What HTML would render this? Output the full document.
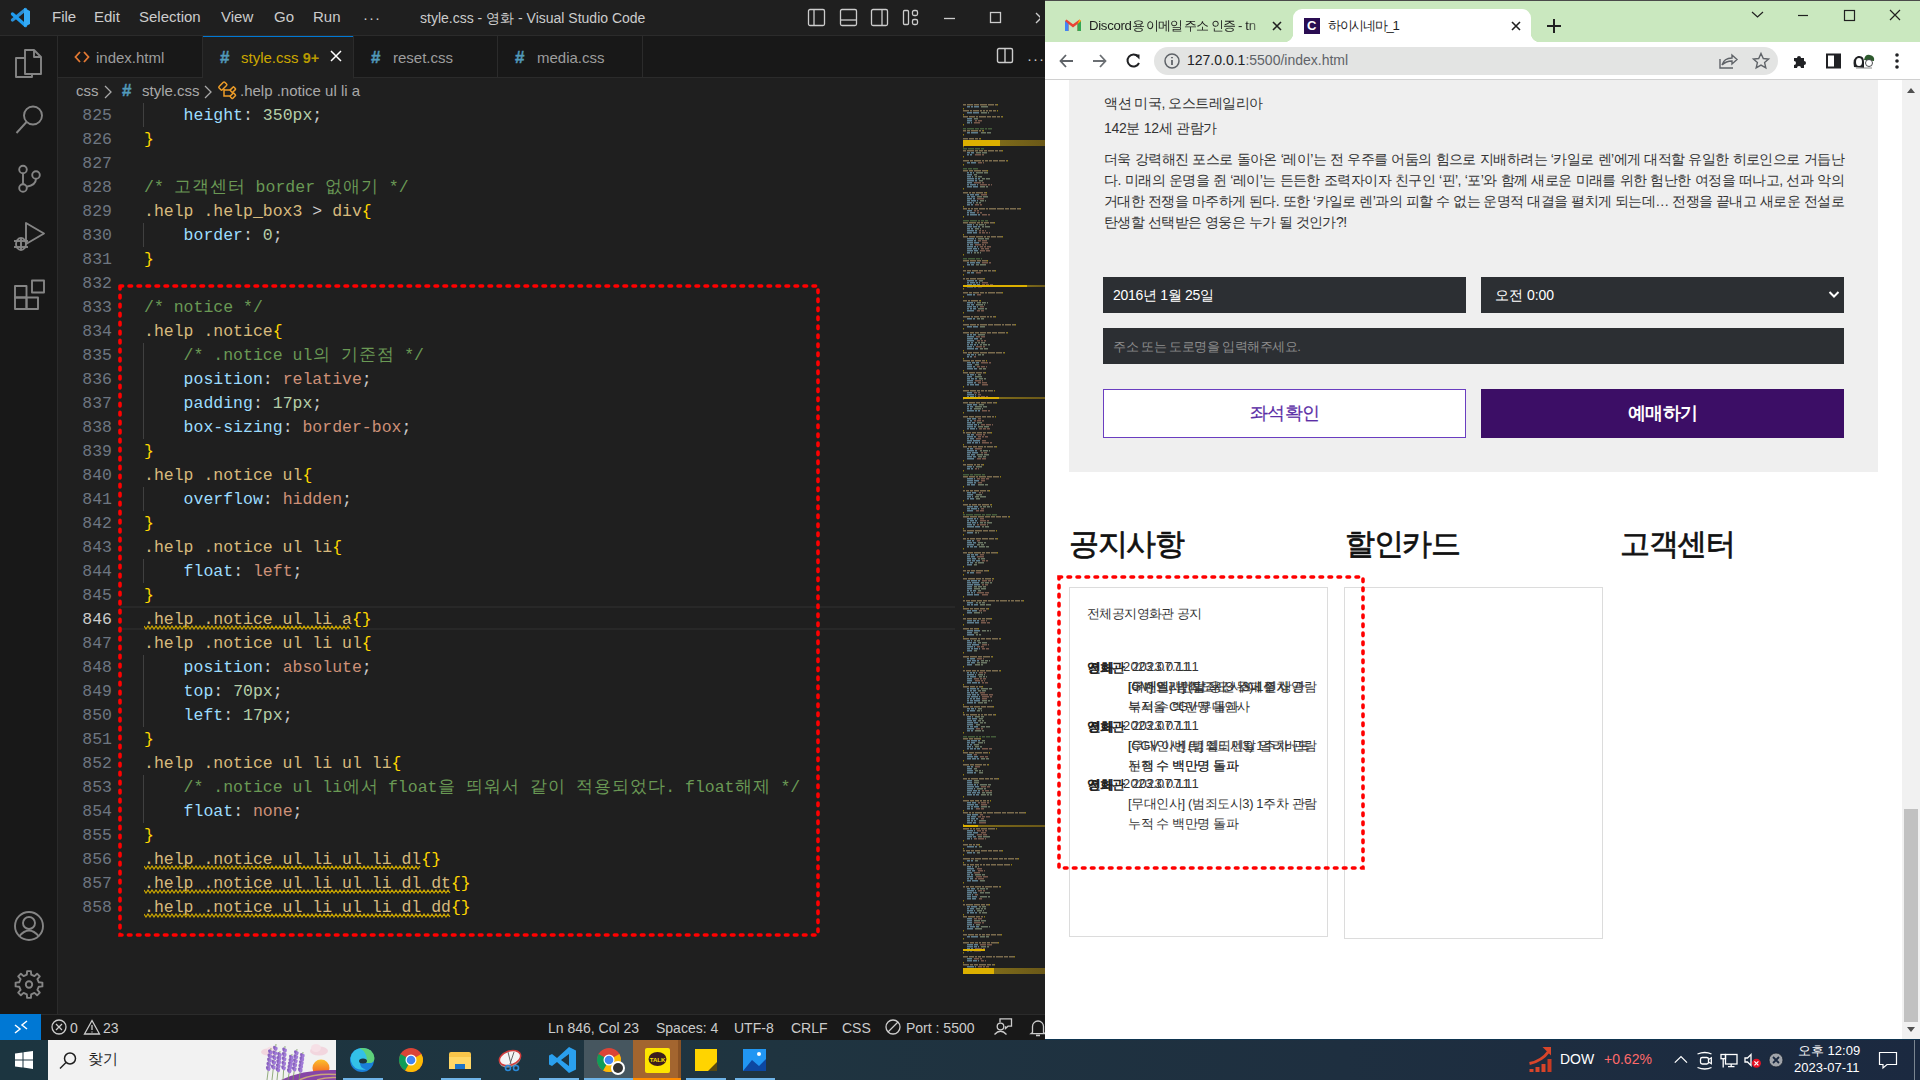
<!DOCTYPE html><html><head><meta charset="utf-8"><style>
*{margin:0;padding:0;box-sizing:border-box}
html,body{width:1920px;height:1080px;overflow:hidden;background:#1f1f1f;font-family:"Liberation Sans",sans-serif}
.ab{position:absolute}
.ui{font-family:"Liberation Sans",sans-serif;white-space:nowrap}
.mono{font-family:"Liberation Mono",monospace;white-space:pre}
</style></head><body>

<div class="ab" style="left:0;top:0;width:1045px;height:36px;background:#1f1f1f;border-bottom:1px solid #2b2b2b"></div>
<svg class="ab" style="left:0;top:0" width="40" height="36">
<path d="M25.5 9.5 L12.5 20" stroke="#2b8fd6" stroke-width="3.4" stroke-linecap="round"/>
<path d="M25.5 25.5 L12.5 14" stroke="#1e9cf0" stroke-width="3.4" stroke-linecap="round"/>
<path d="M24 8 L30 11 V24 L24 27 Z" fill="#35aaf5"/></svg>
<div class="ab ui" style="left:52px;top:8px;font-size:15px;color:#cccccc">File</div>
<div class="ab ui" style="left:94px;top:8px;font-size:15px;color:#cccccc">Edit</div>
<div class="ab ui" style="left:139px;top:8px;font-size:15px;color:#cccccc">Selection</div>
<div class="ab ui" style="left:221px;top:8px;font-size:15px;color:#cccccc">View</div>
<div class="ab ui" style="left:274px;top:8px;font-size:15px;color:#cccccc">Go</div>
<div class="ab ui" style="left:313px;top:8px;font-size:15px;color:#cccccc">Run</div>
<div class="ab ui" style="left:363px;top:9px;font-size:15px;color:#cccccc;letter-spacing:1px">···</div>
<div class="ab ui" style="left:420px;top:10px;font-size:14px;color:#cccccc">style.css - 영화 - Visual Studio Code</div>
<svg class="ab" style="left:800px;top:8px" width="240" height="20">
<g fill="none" stroke="#cccccc" stroke-width="1.3">
<rect x="8.5" y="1.5" width="16" height="16" rx="1.5"/><line x1="14" y1="2" x2="14" y2="17"/>
<rect x="40.5" y="1.5" width="16" height="16" rx="1.5"/><line x1="41" y1="12" x2="56" y2="12"/>
<rect x="71.5" y="1.5" width="16" height="16" rx="1.5"/><line x1="82" y1="2" x2="82" y2="17"/>
<rect x="103.5" y="2.5" width="5" height="14" rx="1"/><rect x="112.5" y="2.5" width="5" height="5" rx="1.5"/><rect x="112.5" y="11.5" width="5" height="5" rx="1.5"/>
<line x1="144" y1="10.5" x2="155" y2="10.5"/>
<rect x="190.5" y="4.5" width="10" height="10"/>
<line x1="236" y1="5" x2="246" y2="15"/><line x1="246" y1="5" x2="236" y2="15"/>
</g></svg>
<div class="ab" style="left:0;top:36px;width:58px;height:978px;background:#181818;border-right:1px solid #2b2b2b"></div>
<svg class="ab" style="left:0;top:36px" width="57" height="290" fill="none" stroke="#858585" stroke-width="1.9" stroke-linejoin="round">
<path d="M25 14 h9 l7 7 v17 h-16 z M34 14 v7 h7"/><path d="M25 22 h-9 v19 h16 v-3"/>
<circle cx="33" cy="79.5" r="9"/><line x1="26.5" y1="86" x2="16.5" y2="97"/>
<circle cx="23" cy="133.5" r="3.8"/><circle cx="23" cy="152" r="3.8"/><circle cx="36" cy="139" r="3.8"/><line x1="23" y1="137.3" x2="23" y2="148.2"/><path d="M36 142.8 q0 6.5 -9.5 8"/>
<path d="M26 187 v21 l18 -10.5 z"/><ellipse cx="21" cy="208" rx="5" ry="6" fill="#181818"/><line x1="14" y1="205" x2="28" y2="205"/><line x1="14" y1="211" x2="28" y2="211"/><line x1="21" y1="203" x2="21" y2="214"/>
<rect x="15" y="261.5" width="11.5" height="11.5"/><rect x="26.5" y="261.5" width="11.5" height="11.5"/><rect x="15" y="250" width="11.5" height="11.5"/><rect x="32" y="244.5" width="12" height="12"/>
</svg>
<svg class="ab" style="left:0;top:900px" width="57" height="100" fill="none" stroke="#858585" stroke-width="1.9" stroke-linejoin="round">
<circle cx="29" cy="26" r="14"/><circle cx="29" cy="23" r="6"/><path d="M19 36.5 q10 -12 20 0"/>
<path d="M38.8 82.3 L42.4 82.6 L42.4 86.4 L38.8 86.7 L37.4 89.9 L39.8 92.6 L37.1 95.3 L34.4 92.9 L31.2 94.3 L30.9 97.9 L27.1 97.9 L26.8 94.3 L23.6 92.9 L20.9 95.3 L18.2 92.6 L20.6 89.9 L19.2 86.7 L15.6 86.4 L15.6 82.6 L19.2 82.3 L20.6 79.1 L18.2 76.4 L20.9 73.7 L23.6 76.1 L26.8 74.7 L27.1 71.1 L30.9 71.1 L31.2 74.7 L34.4 76.1 L37.1 73.7 L39.8 76.4 L37.4 79.1 Z"/><circle cx="29" cy="84.5" r="3.2"/>
</svg>
<div class="ab" style="left:58px;top:36px;width:987px;height:42px;background:#181818;border-bottom:1px solid #2b2b2b"></div>
<div class="ab" style="left:58px;top:36px;width:145px;height:42px;background:#181818;border-right:1px solid #2b2b2b;border-bottom:1px solid #2b2b2b;"></div>
<div class="ab" style="left:203px;top:36px;width:151px;height:43px;background:#1f1f1f;border-right:1px solid #2b2b2b;border-bottom:1px solid #1f1f1f;"></div>
<div class="ab" style="left:354px;top:36px;width:144px;height:42px;background:#181818;border-right:1px solid #2b2b2b;border-bottom:1px solid #2b2b2b;"></div>
<div class="ab" style="left:498px;top:36px;width:145px;height:42px;background:#181818;border-right:1px solid #2b2b2b;border-bottom:1px solid #2b2b2b;"></div>
<div class="ab" style="left:203px;top:36px;width:150px;height:1px;background:#0078d4"></div>
<svg class="ab" style="left:74px;top:50px" width="16" height="14" fill="none" stroke="#e37933" stroke-width="1.8"><path d="M6 2 L1.5 7 L6 12 M10 2 L14.5 7 L10 12"/></svg>
<div class="ab ui" style="left:96px;top:49px;font-size:15px;color:#9d9d9d">index.html</div>
<div class="ab ui" style="left:220px;top:48px;font-size:17px;color:#519aba;font-weight:bold;-webkit-text-stroke:0.4px #519aba">#</div>
<div class="ab ui" style="left:241px;top:49px;font-size:15px;color:#cca700">style.css <span style="font-size:14.5px;color:#b89a00;font-weight:bold">9+</span></div>
<svg class="ab" style="left:329px;top:49px" width="14" height="14" stroke="#ffffff" stroke-width="1.5"><path d="M2 2 L12 12 M12 2 L2 12"/></svg>
<div class="ab ui" style="left:371px;top:48px;font-size:17px;color:#519aba;font-weight:bold;-webkit-text-stroke:0.4px #519aba">#</div>
<div class="ab ui" style="left:393px;top:49px;font-size:15px;color:#9d9d9d">reset.css</div>
<div class="ab ui" style="left:515px;top:48px;font-size:17px;color:#519aba;font-weight:bold;-webkit-text-stroke:0.4px #519aba">#</div>
<div class="ab ui" style="left:537px;top:49px;font-size:15px;color:#9d9d9d">media.css</div>
<svg class="ab" style="left:996px;top:47px" width="20" height="18" fill="none" stroke="#cccccc" stroke-width="1.4"><rect x="1.5" y="1.5" width="15" height="14" rx="1.5"/><line x1="9" y1="2" x2="9" y2="15"/></svg>
<div class="ab ui" style="left:1027px;top:50px;font-size:15px;color:#cccccc;letter-spacing:1px">···</div>
<div class="ab" style="left:58px;top:79px;width:987px;height:24px;background:#1f1f1f"></div>
<div class="ab ui" style="left:76px;top:82px;font-size:15px;color:#a9a9a9">css</div>
<svg class="ab" style="left:103px;top:85px" width="10" height="14" fill="none" stroke="#a9a9a9" stroke-width="1.3"><path d="M2 1 L8 7 L2 13"/></svg>
<div class="ab ui" style="left:122px;top:81px;font-size:17px;color:#519aba;font-weight:bold;-webkit-text-stroke:0.4px #519aba">#</div>
<div class="ab ui" style="left:142px;top:82px;font-size:15px;color:#a9a9a9">style.css</div>
<svg class="ab" style="left:203px;top:85px" width="10" height="14" fill="none" stroke="#a9a9a9" stroke-width="1.3"><path d="M2 1 L8 7 L2 13"/></svg>
<svg class="ab" style="left:214px;top:80px" width="24" height="22" fill="none" stroke="#ee9d28" stroke-width="1.5"><rect x="4.8" y="3.8" width="8" height="4.5" rx="1" transform="rotate(-45 8.8 6)"/><rect x="16.4" y="7.9" width="5" height="3.4" rx="0.8" transform="rotate(-45 18.9 9.6)"/><rect x="16.4" y="14.1" width="5" height="3.4" rx="0.8" transform="rotate(-45 18.9 15.8)"/><path d="M10 9 V16 H16.8 M10 10 H16.8"/></svg>
<div class="ab ui" style="left:240px;top:82px;font-size:15px;color:#a9a9a9">.help .notice ul li a</div>
<div class="ab" style="left:120px;top:606px;width:835px;height:24px;border-top:2px solid #282828;border-bottom:2px solid #282828"></div>
<div class="ab mono" style="left:60px;top:104px;width:52px;height:24px;line-height:24px;text-align:right;font-size:16.5px;color:#6e7681">825</div>
<div class="ab" style="left:143px;top:103px;width:1px;height:24px;background:#404040"></div>
<div class="ab mono" style="left:144px;top:104px;height:24px;line-height:24px;font-size:16.5px"><span style="color:#cccccc">    </span><span style="color:#9cdcfe">height</span><span style="color:#cccccc">: </span><span style="color:#b5cea8">350px</span><span style="color:#cccccc">;</span></div>
<div class="ab mono" style="left:60px;top:128px;width:52px;height:24px;line-height:24px;text-align:right;font-size:16.5px;color:#6e7681">826</div>
<div class="ab mono" style="left:144px;top:128px;height:24px;line-height:24px;font-size:16.5px"><span style="color:#ffd700">}</span></div>
<div class="ab mono" style="left:60px;top:152px;width:52px;height:24px;line-height:24px;text-align:right;font-size:16.5px;color:#6e7681">827</div>
<div class="ab mono" style="left:60px;top:176px;width:52px;height:24px;line-height:24px;text-align:right;font-size:16.5px;color:#6e7681">828</div>
<div class="ab mono" style="left:144px;top:176px;height:24px;line-height:24px;font-size:16.5px"><span style="color:#6a9955">/* <span style="display:inline-block;width:18px;text-align:center">고</span><span style="display:inline-block;width:18px;text-align:center">객</span><span style="display:inline-block;width:18px;text-align:center">센</span><span style="display:inline-block;width:18px;text-align:center">터</span> border <span style="display:inline-block;width:18px;text-align:center">없</span><span style="display:inline-block;width:18px;text-align:center">애</span><span style="display:inline-block;width:18px;text-align:center">기</span> */</span></div>
<div class="ab mono" style="left:60px;top:200px;width:52px;height:24px;line-height:24px;text-align:right;font-size:16.5px;color:#6e7681">829</div>
<div class="ab mono" style="left:144px;top:200px;height:24px;line-height:24px;font-size:16.5px"><span style="color:#d7ba7d">.help .help_box3 </span><span style="color:#cccccc">&gt; </span><span style="color:#d7ba7d">div</span><span style="color:#ffd700">{</span></div>
<div class="ab mono" style="left:60px;top:224px;width:52px;height:24px;line-height:24px;text-align:right;font-size:16.5px;color:#6e7681">830</div>
<div class="ab" style="left:143px;top:223px;width:1px;height:24px;background:#404040"></div>
<div class="ab mono" style="left:144px;top:224px;height:24px;line-height:24px;font-size:16.5px"><span style="color:#cccccc">    </span><span style="color:#9cdcfe">border</span><span style="color:#cccccc">: </span><span style="color:#b5cea8">0</span><span style="color:#cccccc">;</span></div>
<div class="ab mono" style="left:60px;top:248px;width:52px;height:24px;line-height:24px;text-align:right;font-size:16.5px;color:#6e7681">831</div>
<div class="ab mono" style="left:144px;top:248px;height:24px;line-height:24px;font-size:16.5px"><span style="color:#ffd700">}</span></div>
<div class="ab mono" style="left:60px;top:272px;width:52px;height:24px;line-height:24px;text-align:right;font-size:16.5px;color:#6e7681">832</div>
<div class="ab mono" style="left:60px;top:296px;width:52px;height:24px;line-height:24px;text-align:right;font-size:16.5px;color:#6e7681">833</div>
<div class="ab mono" style="left:144px;top:296px;height:24px;line-height:24px;font-size:16.5px"><span style="color:#6a9955">/* notice */</span></div>
<div class="ab mono" style="left:60px;top:320px;width:52px;height:24px;line-height:24px;text-align:right;font-size:16.5px;color:#6e7681">834</div>
<div class="ab mono" style="left:144px;top:320px;height:24px;line-height:24px;font-size:16.5px"><span style="color:#d7ba7d">.help .notice</span><span style="color:#ffd700">{</span></div>
<div class="ab mono" style="left:60px;top:344px;width:52px;height:24px;line-height:24px;text-align:right;font-size:16.5px;color:#6e7681">835</div>
<div class="ab" style="left:143px;top:343px;width:1px;height:24px;background:#404040"></div>
<div class="ab mono" style="left:144px;top:344px;height:24px;line-height:24px;font-size:16.5px"><span style="color:#cccccc">    </span><span style="color:#6a9955">/* .notice ul<span style="display:inline-block;width:18px;text-align:center">의</span> <span style="display:inline-block;width:18px;text-align:center">기</span><span style="display:inline-block;width:18px;text-align:center">준</span><span style="display:inline-block;width:18px;text-align:center">점</span> */</span></div>
<div class="ab mono" style="left:60px;top:368px;width:52px;height:24px;line-height:24px;text-align:right;font-size:16.5px;color:#6e7681">836</div>
<div class="ab" style="left:143px;top:367px;width:1px;height:24px;background:#404040"></div>
<div class="ab mono" style="left:144px;top:368px;height:24px;line-height:24px;font-size:16.5px"><span style="color:#cccccc">    </span><span style="color:#9cdcfe">position</span><span style="color:#cccccc">: </span><span style="color:#ce9178">relative</span><span style="color:#cccccc">;</span></div>
<div class="ab mono" style="left:60px;top:392px;width:52px;height:24px;line-height:24px;text-align:right;font-size:16.5px;color:#6e7681">837</div>
<div class="ab" style="left:143px;top:391px;width:1px;height:24px;background:#404040"></div>
<div class="ab mono" style="left:144px;top:392px;height:24px;line-height:24px;font-size:16.5px"><span style="color:#cccccc">    </span><span style="color:#9cdcfe">padding</span><span style="color:#cccccc">: </span><span style="color:#b5cea8">17px</span><span style="color:#cccccc">;</span></div>
<div class="ab mono" style="left:60px;top:416px;width:52px;height:24px;line-height:24px;text-align:right;font-size:16.5px;color:#6e7681">838</div>
<div class="ab" style="left:143px;top:415px;width:1px;height:24px;background:#404040"></div>
<div class="ab mono" style="left:144px;top:416px;height:24px;line-height:24px;font-size:16.5px"><span style="color:#cccccc">    </span><span style="color:#9cdcfe">box-sizing</span><span style="color:#cccccc">: </span><span style="color:#ce9178">border-box</span><span style="color:#cccccc">;</span></div>
<div class="ab mono" style="left:60px;top:440px;width:52px;height:24px;line-height:24px;text-align:right;font-size:16.5px;color:#6e7681">839</div>
<div class="ab mono" style="left:144px;top:440px;height:24px;line-height:24px;font-size:16.5px"><span style="color:#ffd700">}</span></div>
<div class="ab mono" style="left:60px;top:464px;width:52px;height:24px;line-height:24px;text-align:right;font-size:16.5px;color:#6e7681">840</div>
<div class="ab mono" style="left:144px;top:464px;height:24px;line-height:24px;font-size:16.5px"><span style="color:#d7ba7d">.help .notice ul</span><span style="color:#ffd700">{</span></div>
<div class="ab mono" style="left:60px;top:488px;width:52px;height:24px;line-height:24px;text-align:right;font-size:16.5px;color:#6e7681">841</div>
<div class="ab" style="left:143px;top:487px;width:1px;height:24px;background:#404040"></div>
<div class="ab mono" style="left:144px;top:488px;height:24px;line-height:24px;font-size:16.5px"><span style="color:#cccccc">    </span><span style="color:#9cdcfe">overflow</span><span style="color:#cccccc">: </span><span style="color:#ce9178">hidden</span><span style="color:#cccccc">;</span></div>
<div class="ab mono" style="left:60px;top:512px;width:52px;height:24px;line-height:24px;text-align:right;font-size:16.5px;color:#6e7681">842</div>
<div class="ab mono" style="left:144px;top:512px;height:24px;line-height:24px;font-size:16.5px"><span style="color:#ffd700">}</span></div>
<div class="ab mono" style="left:60px;top:536px;width:52px;height:24px;line-height:24px;text-align:right;font-size:16.5px;color:#6e7681">843</div>
<div class="ab mono" style="left:144px;top:536px;height:24px;line-height:24px;font-size:16.5px"><span style="color:#d7ba7d">.help .notice ul li</span><span style="color:#ffd700">{</span></div>
<div class="ab mono" style="left:60px;top:560px;width:52px;height:24px;line-height:24px;text-align:right;font-size:16.5px;color:#6e7681">844</div>
<div class="ab" style="left:143px;top:559px;width:1px;height:24px;background:#404040"></div>
<div class="ab mono" style="left:144px;top:560px;height:24px;line-height:24px;font-size:16.5px"><span style="color:#cccccc">    </span><span style="color:#9cdcfe">float</span><span style="color:#cccccc">: </span><span style="color:#ce9178">left</span><span style="color:#cccccc">;</span></div>
<div class="ab mono" style="left:60px;top:584px;width:52px;height:24px;line-height:24px;text-align:right;font-size:16.5px;color:#6e7681">845</div>
<div class="ab mono" style="left:144px;top:584px;height:24px;line-height:24px;font-size:16.5px"><span style="color:#ffd700">}</span></div>
<div class="ab mono" style="left:60px;top:608px;width:52px;height:24px;line-height:24px;text-align:right;font-size:16.5px;color:#cccccc">846</div>
<div class="ab mono" style="left:144px;top:608px;height:24px;line-height:24px;font-size:16.5px"><span style="color:#d7ba7d">.help .notice ul li a</span><span style="color:#ffd700">{}</span></div>
<div class="ab mono" style="left:60px;top:632px;width:52px;height:24px;line-height:24px;text-align:right;font-size:16.5px;color:#6e7681">847</div>
<div class="ab mono" style="left:144px;top:632px;height:24px;line-height:24px;font-size:16.5px"><span style="color:#d7ba7d">.help .notice ul li ul</span><span style="color:#ffd700">{</span></div>
<div class="ab mono" style="left:60px;top:656px;width:52px;height:24px;line-height:24px;text-align:right;font-size:16.5px;color:#6e7681">848</div>
<div class="ab" style="left:143px;top:655px;width:1px;height:24px;background:#404040"></div>
<div class="ab mono" style="left:144px;top:656px;height:24px;line-height:24px;font-size:16.5px"><span style="color:#cccccc">    </span><span style="color:#9cdcfe">position</span><span style="color:#cccccc">: </span><span style="color:#ce9178">absolute</span><span style="color:#cccccc">;</span></div>
<div class="ab mono" style="left:60px;top:680px;width:52px;height:24px;line-height:24px;text-align:right;font-size:16.5px;color:#6e7681">849</div>
<div class="ab" style="left:143px;top:679px;width:1px;height:24px;background:#404040"></div>
<div class="ab mono" style="left:144px;top:680px;height:24px;line-height:24px;font-size:16.5px"><span style="color:#cccccc">    </span><span style="color:#9cdcfe">top</span><span style="color:#cccccc">: </span><span style="color:#b5cea8">70px</span><span style="color:#cccccc">;</span></div>
<div class="ab mono" style="left:60px;top:704px;width:52px;height:24px;line-height:24px;text-align:right;font-size:16.5px;color:#6e7681">850</div>
<div class="ab" style="left:143px;top:703px;width:1px;height:24px;background:#404040"></div>
<div class="ab mono" style="left:144px;top:704px;height:24px;line-height:24px;font-size:16.5px"><span style="color:#cccccc">    </span><span style="color:#9cdcfe">left</span><span style="color:#cccccc">: </span><span style="color:#b5cea8">17px</span><span style="color:#cccccc">;</span></div>
<div class="ab mono" style="left:60px;top:728px;width:52px;height:24px;line-height:24px;text-align:right;font-size:16.5px;color:#6e7681">851</div>
<div class="ab mono" style="left:144px;top:728px;height:24px;line-height:24px;font-size:16.5px"><span style="color:#ffd700">}</span></div>
<div class="ab mono" style="left:60px;top:752px;width:52px;height:24px;line-height:24px;text-align:right;font-size:16.5px;color:#6e7681">852</div>
<div class="ab mono" style="left:144px;top:752px;height:24px;line-height:24px;font-size:16.5px"><span style="color:#d7ba7d">.help .notice ul li ul li</span><span style="color:#ffd700">{</span></div>
<div class="ab mono" style="left:60px;top:776px;width:52px;height:24px;line-height:24px;text-align:right;font-size:16.5px;color:#6e7681">853</div>
<div class="ab" style="left:143px;top:775px;width:1px;height:24px;background:#404040"></div>
<div class="ab mono" style="left:144px;top:776px;height:24px;line-height:24px;font-size:16.5px"><span style="color:#cccccc">    </span><span style="color:#6a9955">/* .notice ul li<span style="display:inline-block;width:18px;text-align:center">에</span><span style="display:inline-block;width:18px;text-align:center">서</span> float<span style="display:inline-block;width:18px;text-align:center">을</span> <span style="display:inline-block;width:18px;text-align:center">띄</span><span style="display:inline-block;width:18px;text-align:center">워</span><span style="display:inline-block;width:18px;text-align:center">서</span> <span style="display:inline-block;width:18px;text-align:center">같</span><span style="display:inline-block;width:18px;text-align:center">이</span> <span style="display:inline-block;width:18px;text-align:center">적</span><span style="display:inline-block;width:18px;text-align:center">용</span><span style="display:inline-block;width:18px;text-align:center">되</span><span style="display:inline-block;width:18px;text-align:center">었</span><span style="display:inline-block;width:18px;text-align:center">다</span>. float<span style="display:inline-block;width:18px;text-align:center">해</span><span style="display:inline-block;width:18px;text-align:center">제</span> */</span></div>
<div class="ab mono" style="left:60px;top:800px;width:52px;height:24px;line-height:24px;text-align:right;font-size:16.5px;color:#6e7681">854</div>
<div class="ab" style="left:143px;top:799px;width:1px;height:24px;background:#404040"></div>
<div class="ab mono" style="left:144px;top:800px;height:24px;line-height:24px;font-size:16.5px"><span style="color:#cccccc">    </span><span style="color:#9cdcfe">float</span><span style="color:#cccccc">: </span><span style="color:#ce9178">none</span><span style="color:#cccccc">;</span></div>
<div class="ab mono" style="left:60px;top:824px;width:52px;height:24px;line-height:24px;text-align:right;font-size:16.5px;color:#6e7681">855</div>
<div class="ab mono" style="left:144px;top:824px;height:24px;line-height:24px;font-size:16.5px"><span style="color:#ffd700">}</span></div>
<div class="ab mono" style="left:60px;top:848px;width:52px;height:24px;line-height:24px;text-align:right;font-size:16.5px;color:#6e7681">856</div>
<div class="ab mono" style="left:144px;top:848px;height:24px;line-height:24px;font-size:16.5px"><span style="color:#d7ba7d">.help .notice ul li ul li dl</span><span style="color:#ffd700">{}</span></div>
<div class="ab mono" style="left:60px;top:872px;width:52px;height:24px;line-height:24px;text-align:right;font-size:16.5px;color:#6e7681">857</div>
<div class="ab mono" style="left:144px;top:872px;height:24px;line-height:24px;font-size:16.5px"><span style="color:#d7ba7d">.help .notice ul li ul li dl dt</span><span style="color:#ffd700">{}</span></div>
<div class="ab mono" style="left:60px;top:896px;width:52px;height:24px;line-height:24px;text-align:right;font-size:16.5px;color:#6e7681">858</div>
<div class="ab mono" style="left:144px;top:896px;height:24px;line-height:24px;font-size:16.5px"><span style="color:#d7ba7d">.help .notice ul li ul li dl dd</span><span style="color:#ffd700">{}</span></div>
<svg class="ab" style="left:144px;top:625px" width="208" height="5"><path d="M0 1L2 4L4 1L6 4L8 1L10 4L12 1L14 4L16 1L18 4L20 1L22 4L24 1L26 4L28 1L30 4L32 1L34 4L36 1L38 4L40 1L42 4L44 1L46 4L48 1L50 4L52 1L54 4L56 1L58 4L60 1L62 4L64 1L66 4L68 1L70 4L72 1L74 4L76 1L78 4L80 1L82 4L84 1L86 4L88 1L90 4L92 1L94 4L96 1L98 4L100 1L102 4L104 1L106 4L108 1L110 4L112 1L114 4L116 1L118 4L120 1L122 4L124 1L126 4L128 1L130 4L132 1L134 4L136 1L138 4L140 1L142 4L144 1L146 4L148 1L150 4L152 1L154 4L156 1L158 4L160 1L162 4L164 1L166 4L168 1L170 4L172 1L174 4L176 1L178 4L180 1L182 4L184 1L186 4L188 1L190 4L192 1L194 4L196 1L198 4L200 1L202 4L204 1L206 4" fill="none" stroke="#cca700" stroke-width="1.2"/></svg>
<svg class="ab" style="left:144px;top:865px" width="277" height="5"><path d="M0 1L2 4L4 1L6 4L8 1L10 4L12 1L14 4L16 1L18 4L20 1L22 4L24 1L26 4L28 1L30 4L32 1L34 4L36 1L38 4L40 1L42 4L44 1L46 4L48 1L50 4L52 1L54 4L56 1L58 4L60 1L62 4L64 1L66 4L68 1L70 4L72 1L74 4L76 1L78 4L80 1L82 4L84 1L86 4L88 1L90 4L92 1L94 4L96 1L98 4L100 1L102 4L104 1L106 4L108 1L110 4L112 1L114 4L116 1L118 4L120 1L122 4L124 1L126 4L128 1L130 4L132 1L134 4L136 1L138 4L140 1L142 4L144 1L146 4L148 1L150 4L152 1L154 4L156 1L158 4L160 1L162 4L164 1L166 4L168 1L170 4L172 1L174 4L176 1L178 4L180 1L182 4L184 1L186 4L188 1L190 4L192 1L194 4L196 1L198 4L200 1L202 4L204 1L206 4L208 1L210 4L212 1L214 4L216 1L218 4L220 1L222 4L224 1L226 4L228 1L230 4L232 1L234 4L236 1L238 4L240 1L242 4L244 1L246 4L248 1L250 4L252 1L254 4L256 1L258 4L260 1L262 4L264 1L266 4L268 1L270 4L272 1L274 4L276 1" fill="none" stroke="#cca700" stroke-width="1.2"/></svg>
<svg class="ab" style="left:144px;top:889px" width="307" height="5"><path d="M0 1L2 4L4 1L6 4L8 1L10 4L12 1L14 4L16 1L18 4L20 1L22 4L24 1L26 4L28 1L30 4L32 1L34 4L36 1L38 4L40 1L42 4L44 1L46 4L48 1L50 4L52 1L54 4L56 1L58 4L60 1L62 4L64 1L66 4L68 1L70 4L72 1L74 4L76 1L78 4L80 1L82 4L84 1L86 4L88 1L90 4L92 1L94 4L96 1L98 4L100 1L102 4L104 1L106 4L108 1L110 4L112 1L114 4L116 1L118 4L120 1L122 4L124 1L126 4L128 1L130 4L132 1L134 4L136 1L138 4L140 1L142 4L144 1L146 4L148 1L150 4L152 1L154 4L156 1L158 4L160 1L162 4L164 1L166 4L168 1L170 4L172 1L174 4L176 1L178 4L180 1L182 4L184 1L186 4L188 1L190 4L192 1L194 4L196 1L198 4L200 1L202 4L204 1L206 4L208 1L210 4L212 1L214 4L216 1L218 4L220 1L222 4L224 1L226 4L228 1L230 4L232 1L234 4L236 1L238 4L240 1L242 4L244 1L246 4L248 1L250 4L252 1L254 4L256 1L258 4L260 1L262 4L264 1L266 4L268 1L270 4L272 1L274 4L276 1L278 4L280 1L282 4L284 1L286 4L288 1L290 4L292 1L294 4L296 1L298 4L300 1L302 4L304 1L306 4" fill="none" stroke="#cca700" stroke-width="1.2"/></svg>
<svg class="ab" style="left:144px;top:913px" width="307" height="5"><path d="M0 1L2 4L4 1L6 4L8 1L10 4L12 1L14 4L16 1L18 4L20 1L22 4L24 1L26 4L28 1L30 4L32 1L34 4L36 1L38 4L40 1L42 4L44 1L46 4L48 1L50 4L52 1L54 4L56 1L58 4L60 1L62 4L64 1L66 4L68 1L70 4L72 1L74 4L76 1L78 4L80 1L82 4L84 1L86 4L88 1L90 4L92 1L94 4L96 1L98 4L100 1L102 4L104 1L106 4L108 1L110 4L112 1L114 4L116 1L118 4L120 1L122 4L124 1L126 4L128 1L130 4L132 1L134 4L136 1L138 4L140 1L142 4L144 1L146 4L148 1L150 4L152 1L154 4L156 1L158 4L160 1L162 4L164 1L166 4L168 1L170 4L172 1L174 4L176 1L178 4L180 1L182 4L184 1L186 4L188 1L190 4L192 1L194 4L196 1L198 4L200 1L202 4L204 1L206 4L208 1L210 4L212 1L214 4L216 1L218 4L220 1L222 4L224 1L226 4L228 1L230 4L232 1L234 4L236 1L238 4L240 1L242 4L244 1L246 4L248 1L250 4L252 1L254 4L256 1L258 4L260 1L262 4L264 1L266 4L268 1L270 4L272 1L274 4L276 1L278 4L280 1L282 4L284 1L286 4L288 1L290 4L292 1L294 4L296 1L298 4L300 1L302 4L304 1L306 4" fill="none" stroke="#cca700" stroke-width="1.2"/></svg>
<svg class="ab" style="left:0;top:0" width="1045" height="1000"><path d="M963 104h3v1.6h-3zM967 104h6v1.6h-6zM974 104h5v1.6h-5zM980 104h7v1.6h-7zM988 104h6v1.6h-6zM995 104h2v1.6h-2zM963 110h6v1.6h-6zM970 110h2v1.6h-2zM973 110h6v1.6h-6zM980 110h2v1.6h-2zM983 110h2v1.6h-2zM986 110h2v1.6h-2zM989 110h3v1.6h-3zM993 110h3v1.6h-3zM963 116h5v1.6h-5zM969 116h6v1.6h-6zM976 116h2v1.6h-2zM979 116h7v1.6h-7zM987 116h4v1.6h-4zM992 116h4v1.6h-4zM997 116h3v1.6h-3zM1001 116h1v1.6h-1zM963 130h3v1.6h-3zM967 130h3v1.6h-3zM971 130h7v1.6h-7zM979 130h2v1.6h-2zM982 130h1v1.6h-1zM963 138h5v1.6h-5zM969 138h5v1.6h-5zM975 138h3v1.6h-3zM979 138h1v1.6h-1zM963 150h3v1.6h-3zM967 150h7v1.6h-7zM975 150h3v1.6h-3zM979 150h4v1.6h-4zM984 150h3v1.6h-3zM988 150h6v1.6h-6zM995 150h3v1.6h-3zM999 150h3v1.6h-3zM963 160h6v1.6h-6zM970 160h3v1.6h-3zM974 160h7v1.6h-7zM982 160h2v1.6h-2zM985 160h3v1.6h-3zM989 160h3v1.6h-3zM993 160h5v1.6h-5zM999 160h6v1.6h-6zM1006 160h1v1.6h-1zM963 170h5v1.6h-5zM969 170h4v1.6h-4zM974 170h7v1.6h-7zM982 170h5v1.6h-5zM963 192h5v1.6h-5zM969 192h2v1.6h-2zM972 192h3v1.6h-3zM976 192h7v1.6h-7zM984 192h2v1.6h-2zM963 208h4v1.6h-4zM968 208h2v1.6h-2zM971 208h2v1.6h-2zM974 208h4v1.6h-4zM979 208h6v1.6h-6zM986 208h2v1.6h-2zM989 208h7v1.6h-7zM997 208h7v1.6h-7zM1005 208h4v1.6h-4zM1010 208h6v1.6h-6zM1017 208h3v1.6h-3zM963 222h5v1.6h-5zM969 222h7v1.6h-7zM977 222h3v1.6h-3zM981 222h2v1.6h-2zM984 222h5v1.6h-5zM990 222h4v1.6h-4zM963 236h5v1.6h-5zM969 236h6v1.6h-6zM976 236h7v1.6h-7zM984 236h2v1.6h-2zM987 236h3v1.6h-3zM991 236h5v1.6h-5zM997 236h5v1.6h-5zM963 260h6v1.6h-6zM970 260h6v1.6h-6zM977 260h4v1.6h-4zM982 260h5v1.6h-5zM963 270h3v1.6h-3zM967 270h4v1.6h-4zM972 270h6v1.6h-6zM979 270h4v1.6h-4zM984 270h3v1.6h-3zM988 270h3v1.6h-3zM992 270h3v1.6h-3zM963 278h2v1.6h-2zM966 278h3v1.6h-3zM970 278h6v1.6h-6zM977 278h7v1.6h-7zM963 292h5v1.6h-5zM969 292h3v1.6h-3zM973 292h6v1.6h-6zM980 292h4v1.6h-4zM985 292h2v1.6h-2zM988 292h7v1.6h-7zM996 292h6v1.6h-6zM963 300h4v1.6h-4zM968 300h2v1.6h-2zM971 300h7v1.6h-7zM979 300h1v1.6h-1zM963 316h7v1.6h-7zM971 316h2v1.6h-2zM974 316h5v1.6h-5zM980 316h6v1.6h-6zM987 316h2v1.6h-2zM990 316h2v1.6h-2zM993 316h2v1.6h-2zM963 324h6v1.6h-6zM970 324h6v1.6h-6zM977 324h2v1.6h-2zM980 324h7v1.6h-7zM988 324h5v1.6h-5zM994 324h7v1.6h-7zM1002 324h2v1.6h-2zM1005 324h6v1.6h-6zM1012 324h3v1.6h-3zM963 332h6v1.6h-6zM970 332h4v1.6h-4zM975 332h4v1.6h-4zM980 332h6v1.6h-6zM987 332h4v1.6h-4zM992 332h5v1.6h-5zM998 332h7v1.6h-7zM1006 332h1v1.6h-1zM963 352h4v1.6h-4zM968 352h4v1.6h-4zM973 352h6v1.6h-6zM980 352h7v1.6h-7zM988 352h7v1.6h-7zM996 352h6v1.6h-6zM1003 352h1v1.6h-1zM963 360h7v1.6h-7zM971 360h3v1.6h-3zM975 360h6v1.6h-6zM982 360h3v1.6h-3zM963 372h5v1.6h-5zM969 372h6v1.6h-6zM976 372h6v1.6h-6zM983 372h2v1.6h-2zM963 390h6v1.6h-6zM970 390h6v1.6h-6zM977 390h3v1.6h-3zM981 390h3v1.6h-3zM985 390h2v1.6h-2zM988 390h5v1.6h-5zM963 402h5v1.6h-5zM969 402h6v1.6h-6zM976 402h4v1.6h-4zM981 402h5v1.6h-5zM987 402h5v1.6h-5zM993 402h3v1.6h-3zM963 416h5v1.6h-5zM969 416h5v1.6h-5zM975 416h6v1.6h-6zM982 416h4v1.6h-4zM987 416h4v1.6h-4zM992 416h2v1.6h-2zM963 432h2v1.6h-2zM966 432h5v1.6h-5zM972 432h4v1.6h-4zM977 432h5v1.6h-5zM983 432h3v1.6h-3zM987 432h4v1.6h-4zM963 446h4v1.6h-4zM968 446h4v1.6h-4zM973 446h4v1.6h-4zM978 446h5v1.6h-5zM984 446h2v1.6h-2zM987 446h6v1.6h-6zM994 446h2v1.6h-2zM963 464h3v1.6h-3zM967 464h6v1.6h-6zM974 464h2v1.6h-2zM977 464h3v1.6h-3zM981 464h2v1.6h-2zM963 476h5v1.6h-5zM969 476h6v1.6h-6zM976 476h2v1.6h-2zM979 476h7v1.6h-7zM987 476h5v1.6h-5zM993 476h6v1.6h-6zM963 490h2v1.6h-2zM966 490h3v1.6h-3zM970 490h3v1.6h-3zM974 490h5v1.6h-5zM980 490h6v1.6h-6zM987 490h2v1.6h-2zM963 504h5v1.6h-5zM969 504h2v1.6h-2zM972 504h5v1.6h-5zM978 504h3v1.6h-3zM982 504h7v1.6h-7zM990 504h1v1.6h-1zM963 516h6v1.6h-6zM970 516h7v1.6h-7zM978 516h6v1.6h-6zM985 516h5v1.6h-5zM991 516h4v1.6h-4zM996 516h5v1.6h-5zM1002 516h5v1.6h-5zM1008 516h1v1.6h-1zM963 530h3v1.6h-3zM967 530h7v1.6h-7zM975 530h7v1.6h-7zM983 530h5v1.6h-5zM989 530h6v1.6h-6zM963 538h3v1.6h-3zM967 538h2v1.6h-2zM970 538h5v1.6h-5zM976 538h5v1.6h-5zM982 538h6v1.6h-6zM989 538h5v1.6h-5zM995 538h2v1.6h-2zM963 552h4v1.6h-4zM968 552h5v1.6h-5zM974 552h7v1.6h-7zM982 552h3v1.6h-3zM986 552h4v1.6h-4zM991 552h6v1.6h-6zM963 570h3v1.6h-3zM967 570h3v1.6h-3zM971 570h4v1.6h-4zM976 570h7v1.6h-7zM984 570h4v1.6h-4zM963 578h4v1.6h-4zM968 578h7v1.6h-7zM976 578h5v1.6h-5zM982 578h2v1.6h-2zM985 578h6v1.6h-6zM992 578h1v1.6h-1zM963 600h2v1.6h-2zM966 600h4v1.6h-4zM971 600h5v1.6h-5zM977 600h5v1.6h-5zM983 600h4v1.6h-4zM988 600h7v1.6h-7zM996 600h3v1.6h-3zM1000 600h7v1.6h-7zM1008 600h2v1.6h-2zM1011 600h3v1.6h-3zM1015 600h5v1.6h-5zM1021 600h2v1.6h-2zM963 608h6v1.6h-6zM970 608h3v1.6h-3zM974 608h5v1.6h-5zM980 608h5v1.6h-5zM986 608h2v1.6h-2zM963 618h3v1.6h-3zM967 618h5v1.6h-5zM973 618h4v1.6h-4zM978 618h3v1.6h-3zM982 618h3v1.6h-3zM986 618h5v1.6h-5zM963 628h6v1.6h-6zM970 628h3v1.6h-3zM974 628h4v1.6h-4zM963 638h6v1.6h-6zM970 638h7v1.6h-7zM978 638h2v1.6h-2zM981 638h4v1.6h-4zM986 638h5v1.6h-5zM992 638h6v1.6h-6zM999 638h1v1.6h-1zM963 656h6v1.6h-6zM970 656h7v1.6h-7zM978 656h4v1.6h-4zM983 656h7v1.6h-7zM991 656h1v1.6h-1zM963 670h2v1.6h-2zM966 670h5v1.6h-5zM972 670h4v1.6h-4zM977 670h2v1.6h-2zM980 670h5v1.6h-5zM986 670h5v1.6h-5zM992 670h6v1.6h-6zM999 670h1v1.6h-1zM963 686h6v1.6h-6zM970 686h5v1.6h-5zM976 686h2v1.6h-2zM979 686h3v1.6h-3zM963 706h6v1.6h-6zM970 706h3v1.6h-3zM974 706h6v1.6h-6zM981 706h5v1.6h-5zM987 706h6v1.6h-6zM963 714h2v1.6h-2zM966 714h3v1.6h-3zM970 714h7v1.6h-7zM978 714h2v1.6h-2zM981 714h2v1.6h-2zM984 714h3v1.6h-3zM988 714h4v1.6h-4zM993 714h2v1.6h-2zM963 738h5v1.6h-5zM969 738h4v1.6h-4zM974 738h6v1.6h-6zM963 752h5v1.6h-5zM969 752h5v1.6h-5zM975 752h7v1.6h-7zM983 752h5v1.6h-5zM963 764h6v1.6h-6zM970 764h4v1.6h-4zM975 764h7v1.6h-7zM983 764h3v1.6h-3zM987 764h1v1.6h-1zM963 778h4v1.6h-4zM968 778h2v1.6h-2zM971 778h7v1.6h-7zM979 778h5v1.6h-5zM985 778h4v1.6h-4zM990 778h3v1.6h-3zM994 778h4v1.6h-4zM963 800h6v1.6h-6zM970 800h4v1.6h-4zM975 800h4v1.6h-4zM980 800h2v1.6h-2zM983 800h3v1.6h-3zM987 800h2v1.6h-2zM963 812h5v1.6h-5zM969 812h2v1.6h-2zM972 812h2v1.6h-2zM975 812h7v1.6h-7zM983 812h3v1.6h-3zM987 812h6v1.6h-6zM994 812h7v1.6h-7zM1002 812h4v1.6h-4zM1007 812h7v1.6h-7zM1015 812h3v1.6h-3zM1019 812h6v1.6h-6zM963 828h6v1.6h-6zM970 828h2v1.6h-2zM973 828h2v1.6h-2zM976 828h4v1.6h-4zM981 828h6v1.6h-6zM988 828h7v1.6h-7zM963 844h5v1.6h-5zM969 844h3v1.6h-3zM973 844h2v1.6h-2zM976 844h3v1.6h-3zM963 850h2v1.6h-2zM966 850h4v1.6h-4zM971 850h3v1.6h-3zM975 850h5v1.6h-5zM981 850h6v1.6h-6zM988 850h4v1.6h-4zM993 850h5v1.6h-5zM999 850h3v1.6h-3zM963 858h7v1.6h-7zM971 858h3v1.6h-3zM975 858h6v1.6h-6zM982 858h6v1.6h-6zM989 858h3v1.6h-3zM993 858h5v1.6h-5zM999 858h4v1.6h-4zM1004 858h3v1.6h-3zM1008 858h6v1.6h-6zM1015 858h3v1.6h-3zM963 864h3v1.6h-3zM967 864h2v1.6h-2zM970 864h4v1.6h-4zM975 864h4v1.6h-4zM980 864h2v1.6h-2zM983 864h2v1.6h-2zM986 864h4v1.6h-4zM991 864h5v1.6h-5zM997 864h6v1.6h-6zM1004 864h6v1.6h-6zM963 886h2v1.6h-2zM966 886h3v1.6h-3zM970 886h4v1.6h-4zM975 886h6v1.6h-6zM982 886h2v1.6h-2zM985 886h7v1.6h-7zM993 886h5v1.6h-5zM999 886h1v1.6h-1zM963 904h2v1.6h-2zM966 904h7v1.6h-7zM974 904h6v1.6h-6zM981 904h4v1.6h-4zM986 904h3v1.6h-3zM963 916h4v1.6h-4zM968 916h7v1.6h-7zM976 916h4v1.6h-4zM981 916h2v1.6h-2zM963 934h4v1.6h-4zM968 934h6v1.6h-6zM975 934h3v1.6h-3zM979 934h2v1.6h-2zM982 934h3v1.6h-3zM986 934h4v1.6h-4zM991 934h5v1.6h-5zM997 934h4v1.6h-4zM963 942h6v1.6h-6zM970 942h4v1.6h-4zM975 942h3v1.6h-3zM979 942h2v1.6h-2zM982 942h4v1.6h-4zM987 942h3v1.6h-3zM991 942h7v1.6h-7zM963 956h5v1.6h-5zM969 956h5v1.6h-5zM975 956h2v1.6h-2zM978 956h3v1.6h-3zM982 956h3v1.6h-3zM986 956h6v1.6h-6zM993 956h2v1.6h-2zM996 956h7v1.6h-7zM1004 956h4v1.6h-4zM1009 956h5v1.6h-5zM963 964h6v1.6h-6zM970 964h3v1.6h-3zM974 964h4v1.6h-4zM979 964h7v1.6h-7zM987 964h4v1.6h-4zM992 964h2v1.6h-2z" fill="#d7ba7d" opacity="0.5"/><path d="M967 106h3v1.6h-3zM971 106h2v1.6h-2zM974 106h5v1.6h-5zM967 112h5v1.6h-5zM973 112h6v1.6h-6zM967 118h5v1.6h-5zM967 120h5v1.6h-5zM967 122h3v1.6h-3zM971 122h1v1.6h-1zM967 132h3v1.6h-3zM971 132h7v1.6h-7zM967 140h3v1.6h-3zM971 140h3v1.6h-3zM975 140h1v1.6h-1zM967 142h3v1.6h-3zM971 142h2v1.6h-2zM967 144h5v1.6h-5zM973 144h2v1.6h-2zM976 144h1v1.6h-1zM967 152h3v1.6h-3zM971 152h3v1.6h-3zM967 154h2v1.6h-2zM970 154h2v1.6h-2zM967 162h3v1.6h-3zM971 162h5v1.6h-5zM967 172h2v1.6h-2zM970 172h2v1.6h-2zM973 172h1v1.6h-1zM967 174h5v1.6h-5zM967 176h4v1.6h-4zM972 176h1v1.6h-1zM967 178h7v1.6h-7zM975 178h2v1.6h-2zM978 178h2v1.6h-2zM967 180h7v1.6h-7zM975 180h2v1.6h-2zM967 182h5v1.6h-5zM967 184h2v1.6h-2zM970 184h6v1.6h-6zM977 184h1v1.6h-1zM967 186h5v1.6h-5zM973 186h5v1.6h-5zM967 194h2v1.6h-2zM970 194h4v1.6h-4zM975 194h4v1.6h-4zM967 196h3v1.6h-3zM971 196h4v1.6h-4zM967 198h5v1.6h-5zM973 198h2v1.6h-2zM967 200h3v1.6h-3zM971 200h5v1.6h-5zM977 200h1v1.6h-1zM967 202h5v1.6h-5zM973 202h1v1.6h-1zM967 204h3v1.6h-3zM971 204h2v1.6h-2zM967 210h5v1.6h-5zM967 212h2v1.6h-2zM970 212h5v1.6h-5zM967 214h2v1.6h-2zM970 214h7v1.6h-7zM978 214h2v1.6h-2zM967 224h5v1.6h-5zM973 224h1v1.6h-1zM967 226h5v1.6h-5zM973 226h4v1.6h-4zM978 226h2v1.6h-2zM967 228h3v1.6h-3zM971 228h2v1.6h-2zM967 230h7v1.6h-7zM975 230h2v1.6h-2zM967 232h5v1.6h-5zM973 232h4v1.6h-4zM967 238h7v1.6h-7zM975 238h1v1.6h-1zM967 240h6v1.6h-6zM974 240h2v1.6h-2zM967 242h6v1.6h-6zM974 242h5v1.6h-5zM967 244h2v1.6h-2zM970 244h3v1.6h-3zM967 246h6v1.6h-6zM974 246h2v1.6h-2zM977 246h1v1.6h-1zM967 248h5v1.6h-5zM973 248h4v1.6h-4zM978 248h1v1.6h-1zM967 250h6v1.6h-6zM974 250h4v1.6h-4zM967 252h3v1.6h-3zM971 252h1v1.6h-1zM967 262h2v1.6h-2zM970 262h5v1.6h-5zM976 262h4v1.6h-4zM967 264h3v1.6h-3zM971 264h3v1.6h-3zM967 272h3v1.6h-3zM971 272h3v1.6h-3zM967 280h7v1.6h-7zM975 280h2v1.6h-2zM967 282h2v1.6h-2zM970 282h5v1.6h-5zM976 282h2v1.6h-2zM979 282h1v1.6h-1zM967 284h5v1.6h-5zM973 284h3v1.6h-3zM977 284h3v1.6h-3zM967 286h6v1.6h-6zM974 286h2v1.6h-2zM967 294h5v1.6h-5zM973 294h2v1.6h-2zM967 302h6v1.6h-6zM974 302h1v1.6h-1zM967 304h3v1.6h-3zM971 304h3v1.6h-3zM967 306h5v1.6h-5zM973 306h3v1.6h-3zM977 306h1v1.6h-1zM967 308h2v1.6h-2zM970 308h2v1.6h-2zM973 308h3v1.6h-3zM967 310h7v1.6h-7zM967 318h5v1.6h-5zM973 318h2v1.6h-2zM967 326h5v1.6h-5zM973 326h5v1.6h-5zM967 334h2v1.6h-2zM970 334h2v1.6h-2zM973 334h3v1.6h-3zM967 336h7v1.6h-7zM967 338h6v1.6h-6zM974 338h4v1.6h-4zM967 340h7v1.6h-7zM967 342h3v1.6h-3zM971 342h2v1.6h-2zM967 344h2v1.6h-2zM970 344h3v1.6h-3zM974 344h2v1.6h-2zM977 344h1v1.6h-1zM967 346h5v1.6h-5zM973 346h1v1.6h-1zM967 348h7v1.6h-7zM975 348h3v1.6h-3zM967 354h3v1.6h-3zM971 354h3v1.6h-3zM975 354h1v1.6h-1zM967 356h2v1.6h-2zM970 356h2v1.6h-2zM967 362h4v1.6h-4zM972 362h3v1.6h-3zM976 362h3v1.6h-3zM967 364h5v1.6h-5zM967 366h5v1.6h-5zM973 366h2v1.6h-2zM967 368h6v1.6h-6zM974 368h3v1.6h-3zM967 374h2v1.6h-2zM970 374h4v1.6h-4zM975 374h1v1.6h-1zM967 376h5v1.6h-5zM967 378h3v1.6h-3zM971 378h3v1.6h-3zM975 378h2v1.6h-2zM967 380h6v1.6h-6zM967 382h6v1.6h-6zM974 382h2v1.6h-2zM967 384h2v1.6h-2zM970 384h4v1.6h-4zM975 384h4v1.6h-4zM967 392h5v1.6h-5zM967 394h7v1.6h-7zM975 394h1v1.6h-1zM967 396h2v1.6h-2zM970 396h4v1.6h-4zM975 396h1v1.6h-1zM967 404h5v1.6h-5zM973 404h4v1.6h-4zM967 406h2v1.6h-2zM970 406h3v1.6h-3zM967 408h2v1.6h-2zM970 408h2v1.6h-2zM967 410h7v1.6h-7zM975 410h2v1.6h-2zM978 410h2v1.6h-2zM967 418h4v1.6h-4zM972 418h4v1.6h-4zM967 420h2v1.6h-2zM970 420h2v1.6h-2zM967 422h4v1.6h-4zM972 422h3v1.6h-3zM967 424h6v1.6h-6zM974 424h3v1.6h-3zM978 424h1v1.6h-1zM967 426h6v1.6h-6zM974 426h2v1.6h-2zM967 428h2v1.6h-2zM970 428h5v1.6h-5zM976 428h1v1.6h-1zM967 434h3v1.6h-3zM971 434h3v1.6h-3zM967 436h6v1.6h-6zM974 436h2v1.6h-2zM967 438h2v1.6h-2zM970 438h4v1.6h-4zM967 440h5v1.6h-5zM973 440h7v1.6h-7zM967 442h4v1.6h-4zM972 442h2v1.6h-2zM975 442h3v1.6h-3zM979 442h1v1.6h-1zM967 448h2v1.6h-2zM970 448h3v1.6h-3zM967 450h7v1.6h-7zM975 450h2v1.6h-2zM967 452h4v1.6h-4zM972 452h6v1.6h-6zM967 454h3v1.6h-3zM971 454h4v1.6h-4zM967 456h5v1.6h-5zM973 456h3v1.6h-3zM967 458h7v1.6h-7zM967 466h5v1.6h-5zM973 466h1v1.6h-1zM967 468h3v1.6h-3zM971 468h2v1.6h-2zM967 478h6v1.6h-6zM974 478h1v1.6h-1zM967 480h6v1.6h-6zM974 480h5v1.6h-5zM967 482h6v1.6h-6zM974 482h2v1.6h-2zM967 484h3v1.6h-3zM971 484h4v1.6h-4zM967 492h4v1.6h-4zM972 492h4v1.6h-4zM967 494h6v1.6h-6zM967 496h4v1.6h-4zM972 496h1v1.6h-1zM967 498h2v1.6h-2zM970 498h4v1.6h-4zM967 506h6v1.6h-6zM974 506h4v1.6h-4zM967 508h3v1.6h-3zM971 508h6v1.6h-6zM978 508h1v1.6h-1zM967 510h6v1.6h-6zM967 518h6v1.6h-6zM974 518h2v1.6h-2zM977 518h1v1.6h-1zM967 520h2v1.6h-2zM970 520h4v1.6h-4zM975 520h2v1.6h-2zM967 522h4v1.6h-4zM972 522h4v1.6h-4zM977 522h1v1.6h-1zM967 524h5v1.6h-5zM973 524h2v1.6h-2zM967 526h7v1.6h-7zM975 526h5v1.6h-5zM967 532h6v1.6h-6zM967 540h4v1.6h-4zM972 540h2v1.6h-2zM967 542h5v1.6h-5zM973 542h3v1.6h-3zM967 544h7v1.6h-7zM967 546h2v1.6h-2zM970 546h3v1.6h-3zM974 546h3v1.6h-3zM967 554h3v1.6h-3zM971 554h3v1.6h-3zM975 554h3v1.6h-3zM967 556h3v1.6h-3zM971 556h4v1.6h-4zM967 558h4v1.6h-4zM972 558h4v1.6h-4zM967 560h4v1.6h-4zM972 560h3v1.6h-3zM976 560h4v1.6h-4zM967 562h2v1.6h-2zM970 562h3v1.6h-3zM967 564h5v1.6h-5zM967 572h2v1.6h-2zM970 572h4v1.6h-4zM967 580h3v1.6h-3zM971 580h6v1.6h-6zM978 580h2v1.6h-2zM967 582h4v1.6h-4zM972 582h7v1.6h-7zM967 584h6v1.6h-6zM974 584h6v1.6h-6zM967 586h5v1.6h-5zM967 588h5v1.6h-5zM967 590h2v1.6h-2zM970 590h2v1.6h-2zM973 590h3v1.6h-3zM967 592h3v1.6h-3zM971 592h2v1.6h-2zM974 592h1v1.6h-1zM967 594h6v1.6h-6zM974 594h5v1.6h-5zM967 602h6v1.6h-6zM967 604h3v1.6h-3zM971 604h2v1.6h-2zM974 604h4v1.6h-4zM967 610h4v1.6h-4zM972 610h5v1.6h-5zM967 612h5v1.6h-5zM967 620h5v1.6h-5zM973 620h3v1.6h-3zM977 620h2v1.6h-2zM967 622h7v1.6h-7zM975 622h4v1.6h-4zM967 630h6v1.6h-6zM974 630h6v1.6h-6zM967 632h5v1.6h-5zM967 634h7v1.6h-7zM967 640h3v1.6h-3zM971 640h1v1.6h-1zM967 642h5v1.6h-5zM973 642h3v1.6h-3zM967 644h4v1.6h-4zM972 644h7v1.6h-7zM967 646h6v1.6h-6zM974 646h1v1.6h-1zM967 648h3v1.6h-3zM971 648h2v1.6h-2zM974 648h4v1.6h-4zM979 648h1v1.6h-1zM967 650h5v1.6h-5zM967 658h2v1.6h-2zM970 658h5v1.6h-5zM967 660h4v1.6h-4zM972 660h4v1.6h-4zM977 660h2v1.6h-2zM967 662h3v1.6h-3zM971 662h4v1.6h-4zM967 664h5v1.6h-5zM967 672h2v1.6h-2zM970 672h2v1.6h-2zM973 672h2v1.6h-2zM976 672h1v1.6h-1zM967 674h7v1.6h-7zM975 674h1v1.6h-1zM967 676h2v1.6h-2zM970 676h6v1.6h-6zM967 678h5v1.6h-5zM967 680h5v1.6h-5zM967 682h4v1.6h-4zM972 682h5v1.6h-5zM978 682h2v1.6h-2zM967 688h2v1.6h-2zM970 688h6v1.6h-6zM977 688h2v1.6h-2zM967 690h2v1.6h-2zM970 690h2v1.6h-2zM973 690h3v1.6h-3zM967 692h3v1.6h-3zM971 692h3v1.6h-3zM975 692h3v1.6h-3zM967 694h4v1.6h-4zM972 694h4v1.6h-4zM977 694h2v1.6h-2zM967 696h3v1.6h-3zM971 696h7v1.6h-7zM979 696h1v1.6h-1zM967 698h2v1.6h-2zM970 698h2v1.6h-2zM973 698h2v1.6h-2zM976 698h4v1.6h-4zM967 700h2v1.6h-2zM970 700h3v1.6h-3zM974 700h6v1.6h-6zM967 702h6v1.6h-6zM974 702h2v1.6h-2zM967 708h3v1.6h-3zM971 708h3v1.6h-3zM975 708h1v1.6h-1zM967 710h2v1.6h-2zM970 710h5v1.6h-5zM967 716h4v1.6h-4zM972 716h1v1.6h-1zM967 718h4v1.6h-4zM972 718h5v1.6h-5zM967 720h5v1.6h-5zM973 720h3v1.6h-3zM967 722h6v1.6h-6zM974 722h4v1.6h-4zM967 724h6v1.6h-6zM967 726h2v1.6h-2zM970 726h3v1.6h-3zM974 726h4v1.6h-4zM967 728h7v1.6h-7zM967 730h3v1.6h-3zM971 730h2v1.6h-2zM967 740h3v1.6h-3zM971 740h6v1.6h-6zM978 740h2v1.6h-2zM967 742h3v1.6h-3zM971 742h4v1.6h-4zM967 744h2v1.6h-2zM970 744h2v1.6h-2zM967 746h4v1.6h-4zM972 746h1v1.6h-1zM967 748h2v1.6h-2zM970 748h3v1.6h-3zM974 748h2v1.6h-2zM977 748h3v1.6h-3zM967 754h5v1.6h-5zM967 756h6v1.6h-6zM974 756h4v1.6h-4zM967 758h4v1.6h-4zM972 758h4v1.6h-4zM977 758h2v1.6h-2zM967 766h3v1.6h-3zM971 766h2v1.6h-2zM967 768h5v1.6h-5zM967 770h6v1.6h-6zM967 772h6v1.6h-6zM974 772h2v1.6h-2zM967 780h5v1.6h-5zM967 782h5v1.6h-5zM967 784h6v1.6h-6zM974 784h2v1.6h-2zM977 784h1v1.6h-1zM967 786h7v1.6h-7zM975 786h4v1.6h-4zM967 788h6v1.6h-6zM974 788h1v1.6h-1zM967 790h5v1.6h-5zM973 790h4v1.6h-4zM978 790h2v1.6h-2zM967 792h4v1.6h-4zM972 792h4v1.6h-4zM977 792h3v1.6h-3zM967 794h5v1.6h-5zM973 794h2v1.6h-2zM976 794h3v1.6h-3zM967 802h4v1.6h-4zM972 802h4v1.6h-4zM967 804h7v1.6h-7zM975 804h3v1.6h-3zM967 806h3v1.6h-3zM971 806h2v1.6h-2zM974 806h5v1.6h-5zM967 808h3v1.6h-3zM971 808h2v1.6h-2zM967 814h4v1.6h-4zM972 814h6v1.6h-6zM967 816h3v1.6h-3zM971 816h5v1.6h-5zM967 818h3v1.6h-3zM971 818h4v1.6h-4zM976 818h2v1.6h-2zM967 820h3v1.6h-3zM971 820h2v1.6h-2zM974 820h2v1.6h-2zM967 822h5v1.6h-5zM973 822h3v1.6h-3zM967 830h6v1.6h-6zM974 830h1v1.6h-1zM967 832h5v1.6h-5zM973 832h5v1.6h-5zM967 834h7v1.6h-7zM967 836h5v1.6h-5zM973 836h3v1.6h-3zM967 838h3v1.6h-3zM971 838h1v1.6h-1zM967 846h7v1.6h-7zM975 846h2v1.6h-2zM967 852h5v1.6h-5zM973 852h2v1.6h-2zM967 860h3v1.6h-3zM971 860h2v1.6h-2zM967 866h4v1.6h-4zM972 866h1v1.6h-1zM967 868h7v1.6h-7zM967 870h4v1.6h-4zM972 870h3v1.6h-3zM967 872h5v1.6h-5zM967 874h3v1.6h-3zM971 874h2v1.6h-2zM967 876h6v1.6h-6zM967 878h2v1.6h-2zM970 878h3v1.6h-3zM967 880h4v1.6h-4zM972 880h6v1.6h-6zM967 888h3v1.6h-3zM971 888h4v1.6h-4zM967 890h7v1.6h-7zM975 890h1v1.6h-1zM967 892h5v1.6h-5zM973 892h4v1.6h-4zM967 894h4v1.6h-4zM972 894h1v1.6h-1zM967 896h4v1.6h-4zM972 896h5v1.6h-5zM967 898h4v1.6h-4zM972 898h4v1.6h-4zM967 906h3v1.6h-3zM971 906h6v1.6h-6zM967 908h2v1.6h-2zM970 908h4v1.6h-4zM967 910h6v1.6h-6zM974 910h1v1.6h-1zM967 912h2v1.6h-2zM970 912h4v1.6h-4zM975 912h2v1.6h-2zM967 918h5v1.6h-5zM967 920h5v1.6h-5zM967 922h5v1.6h-5zM967 924h5v1.6h-5zM973 924h1v1.6h-1zM967 926h2v1.6h-2zM970 926h5v1.6h-5zM976 926h3v1.6h-3zM967 928h6v1.6h-6zM967 936h3v1.6h-3zM971 936h7v1.6h-7zM967 944h6v1.6h-6zM974 944h4v1.6h-4zM967 946h6v1.6h-6zM974 946h3v1.6h-3zM978 946h1v1.6h-1zM967 948h3v1.6h-3zM971 948h2v1.6h-2zM967 950h2v1.6h-2zM970 950h2v1.6h-2zM967 958h5v1.6h-5zM967 960h5v1.6h-5zM973 960h4v1.6h-4zM978 960h1v1.6h-1zM967 966h7v1.6h-7zM975 966h1v1.6h-1z" fill="#9cdcfe" opacity="0.5"/><path d="M975 120h2v1.6h-2zM978 120h4v1.6h-4zM974 122h6v1.6h-6zM975 142h2v1.6h-2zM979 144h6v1.6h-6zM975 154h6v1.6h-6zM982 154h2v1.6h-2zM978 162h4v1.6h-4zM983 162h1v1.6h-1zM974 182h7v1.6h-7zM982 182h2v1.6h-2zM980 184h7v1.6h-7zM988 184h2v1.6h-2zM991 184h1v1.6h-1zM981 194h6v1.6h-6zM977 198h7v1.6h-7zM975 204h4v1.6h-4zM980 204h2v1.6h-2zM974 210h2v1.6h-2zM977 210h2v1.6h-2zM977 212h2v1.6h-2zM980 212h2v1.6h-2zM982 214h5v1.6h-5zM988 214h2v1.6h-2zM979 230h2v1.6h-2zM982 230h2v1.6h-2zM985 230h1v1.6h-1zM979 232h2v1.6h-2zM982 232h3v1.6h-3zM986 232h2v1.6h-2zM989 232h1v1.6h-1zM978 240h3v1.6h-3zM982 240h5v1.6h-5zM982 242h6v1.6h-6zM975 244h6v1.6h-6zM982 244h2v1.6h-2zM985 244h1v1.6h-1zM980 246h3v1.6h-3zM984 246h2v1.6h-2zM987 246h4v1.6h-4zM981 248h3v1.6h-3zM985 248h4v1.6h-4zM980 250h5v1.6h-5zM986 250h4v1.6h-4zM982 262h6v1.6h-6zM989 262h2v1.6h-2zM976 272h5v1.6h-5zM982 282h6v1.6h-6zM982 284h3v1.6h-3zM986 284h3v1.6h-3zM990 284h3v1.6h-3zM978 286h4v1.6h-4zM977 294h4v1.6h-4zM980 306h4v1.6h-4zM977 310h3v1.6h-3zM981 310h3v1.6h-3zM976 336h4v1.6h-4zM981 336h4v1.6h-4zM977 340h3v1.6h-3zM981 340h2v1.6h-2zM984 340h2v1.6h-2zM976 346h6v1.6h-6zM983 346h2v1.6h-2zM974 356h2v1.6h-2zM981 362h7v1.6h-7zM989 362h2v1.6h-2zM977 366h3v1.6h-3zM981 366h4v1.6h-4zM986 366h1v1.6h-1zM975 380h6v1.6h-6zM982 380h1v1.6h-1zM978 382h3v1.6h-3zM982 382h5v1.6h-5zM982 384h6v1.6h-6zM974 392h3v1.6h-3zM978 392h2v1.6h-2zM978 394h3v1.6h-3zM978 396h2v1.6h-2zM981 396h4v1.6h-4zM986 396h2v1.6h-2zM982 410h5v1.6h-5zM988 410h2v1.6h-2zM978 418h3v1.6h-3zM974 420h2v1.6h-2zM977 420h4v1.6h-4zM982 420h2v1.6h-2zM981 424h4v1.6h-4zM986 424h5v1.6h-5zM992 424h1v1.6h-1zM979 428h3v1.6h-3zM983 428h3v1.6h-3zM987 428h3v1.6h-3zM976 434h6v1.6h-6zM983 434h2v1.6h-2zM978 436h3v1.6h-3zM982 436h2v1.6h-2zM985 436h3v1.6h-3zM976 438h5v1.6h-5zM982 440h4v1.6h-4zM982 442h7v1.6h-7zM990 442h2v1.6h-2zM975 448h7v1.6h-7zM981 452h2v1.6h-2zM984 452h3v1.6h-3zM977 458h4v1.6h-4zM982 458h4v1.6h-4zM975 468h2v1.6h-2zM978 468h1v1.6h-1zM977 478h3v1.6h-3zM981 478h4v1.6h-4zM986 478h3v1.6h-3zM981 480h4v1.6h-4zM978 482h4v1.6h-4zM979 492h2v1.6h-2zM982 492h1v1.6h-1zM981 508h3v1.6h-3zM976 510h3v1.6h-3zM980 510h4v1.6h-4zM980 518h4v1.6h-4zM980 520h6v1.6h-6zM987 520h2v1.6h-2zM977 524h2v1.6h-2zM980 524h6v1.6h-6zM987 524h1v1.6h-1zM977 540h3v1.6h-3zM980 554h4v1.6h-4zM977 556h7v1.6h-7zM982 560h3v1.6h-3zM986 560h2v1.6h-2zM976 572h5v1.6h-5zM982 580h5v1.6h-5zM988 580h3v1.6h-3zM992 580h1v1.6h-1zM982 584h2v1.6h-2zM985 584h3v1.6h-3zM977 592h7v1.6h-7zM985 592h4v1.6h-4zM982 594h6v1.6h-6zM979 610h3v1.6h-3zM983 610h3v1.6h-3zM981 620h4v1.6h-4zM986 620h1v1.6h-1zM981 622h5v1.6h-5zM987 622h3v1.6h-3zM982 644h5v1.6h-5zM988 644h1v1.6h-1zM977 646h3v1.6h-3zM981 646h3v1.6h-3zM982 648h3v1.6h-3zM986 648h3v1.6h-3zM977 658h5v1.6h-5zM983 658h1v1.6h-1zM979 672h4v1.6h-4zM984 672h2v1.6h-2zM974 678h5v1.6h-5zM980 678h2v1.6h-2zM983 678h3v1.6h-3zM975 680h5v1.6h-5zM981 680h2v1.6h-2zM984 680h1v1.6h-1zM982 682h2v1.6h-2zM985 682h3v1.6h-3zM980 692h5v1.6h-5zM981 694h7v1.6h-7zM989 694h4v1.6h-4zM982 696h7v1.6h-7zM990 696h2v1.6h-2zM982 698h5v1.6h-5zM976 728h4v1.6h-4zM981 728h2v1.6h-2zM982 748h6v1.6h-6zM989 748h3v1.6h-3zM974 754h3v1.6h-3zM980 756h4v1.6h-4zM985 756h3v1.6h-3zM975 766h5v1.6h-5zM981 786h5v1.6h-5zM987 786h3v1.6h-3zM982 790h2v1.6h-2zM985 790h4v1.6h-4zM990 790h2v1.6h-2zM978 802h2v1.6h-2zM981 802h5v1.6h-5zM987 802h2v1.6h-2zM981 804h6v1.6h-6zM976 808h4v1.6h-4zM981 808h3v1.6h-3zM980 814h3v1.6h-3zM978 816h3v1.6h-3zM982 816h3v1.6h-3zM986 816h4v1.6h-4zM981 818h3v1.6h-3zM979 822h7v1.6h-7zM977 830h4v1.6h-4zM982 830h2v1.6h-2zM985 830h2v1.6h-2zM981 832h5v1.6h-5zM977 834h5v1.6h-5zM983 834h4v1.6h-4zM974 838h3v1.6h-3zM978 838h6v1.6h-6zM985 838h1v1.6h-1zM977 868h5v1.6h-5zM978 870h5v1.6h-5zM984 870h1v1.6h-1zM974 872h6v1.6h-6zM976 876h6v1.6h-6zM983 876h5v1.6h-5zM975 878h2v1.6h-2zM978 878h6v1.6h-6zM978 890h4v1.6h-4zM983 890h2v1.6h-2zM975 894h3v1.6h-3zM979 898h3v1.6h-3zM974 918h3v1.6h-3zM978 918h4v1.6h-4zM974 922h7v1.6h-7zM982 922h2v1.6h-2zM980 944h6v1.6h-6zM987 944h5v1.6h-5zM975 948h7v1.6h-7zM983 948h2v1.6h-2zM974 950h7v1.6h-7zM974 958h5v1.6h-5zM980 958h2v1.6h-2zM981 960h3v1.6h-3zM985 960h1v1.6h-1zM978 966h4v1.6h-4zM983 966h2v1.6h-2zM986 966h3v1.6h-3z" fill="#ce9178" opacity="0.5"/><path d="M981 106h7v1.6h-7zM981 112h6v1.6h-6zM988 112h1v1.6h-1zM974 118h4v1.6h-4zM981 132h5v1.6h-5zM987 132h4v1.6h-4zM978 140h3v1.6h-3zM976 152h5v1.6h-5zM982 152h5v1.6h-5zM976 172h7v1.6h-7zM984 172h4v1.6h-4zM974 174h3v1.6h-3zM975 176h2v1.6h-2zM978 176h4v1.6h-4zM982 178h3v1.6h-3zM986 178h4v1.6h-4zM979 180h4v1.6h-4zM980 186h5v1.6h-5zM986 186h2v1.6h-2zM977 196h5v1.6h-5zM983 196h5v1.6h-5zM980 200h4v1.6h-4zM985 200h1v1.6h-1zM976 202h2v1.6h-2zM979 202h2v1.6h-2zM976 224h2v1.6h-2zM979 224h5v1.6h-5zM985 224h1v1.6h-1zM982 226h2v1.6h-2zM985 226h5v1.6h-5zM975 228h4v1.6h-4zM980 228h1v1.6h-1zM978 238h6v1.6h-6zM985 238h4v1.6h-4zM974 252h2v1.6h-2zM977 252h2v1.6h-2zM980 252h1v1.6h-1zM976 264h3v1.6h-3zM980 264h6v1.6h-6zM979 280h4v1.6h-4zM977 302h4v1.6h-4zM982 302h4v1.6h-4zM987 302h1v1.6h-1zM976 304h7v1.6h-7zM984 304h1v1.6h-1zM978 308h6v1.6h-6zM985 308h2v1.6h-2zM977 318h3v1.6h-3zM981 318h3v1.6h-3zM980 326h5v1.6h-5zM978 334h7v1.6h-7zM980 338h2v1.6h-2zM975 342h2v1.6h-2zM978 342h2v1.6h-2zM981 342h4v1.6h-4zM980 344h2v1.6h-2zM983 344h4v1.6h-4zM988 344h2v1.6h-2zM980 348h3v1.6h-3zM984 348h4v1.6h-4zM978 354h3v1.6h-3zM982 354h2v1.6h-2zM975 364h4v1.6h-4zM979 368h3v1.6h-3zM983 368h3v1.6h-3zM978 374h3v1.6h-3zM975 376h7v1.6h-7zM979 378h4v1.6h-4zM984 378h2v1.6h-2zM979 404h5v1.6h-5zM975 406h7v1.6h-7zM983 406h4v1.6h-4zM974 408h7v1.6h-7zM982 408h1v1.6h-1zM977 422h5v1.6h-5zM978 426h5v1.6h-5zM984 426h5v1.6h-5zM980 450h2v1.6h-2zM983 450h5v1.6h-5zM989 450h1v1.6h-1zM977 454h6v1.6h-6zM984 454h5v1.6h-5zM978 456h4v1.6h-4zM983 456h3v1.6h-3zM976 466h6v1.6h-6zM978 484h6v1.6h-6zM985 484h3v1.6h-3zM976 494h6v1.6h-6zM975 496h4v1.6h-4zM980 496h6v1.6h-6zM976 498h4v1.6h-4zM980 506h2v1.6h-2zM983 506h3v1.6h-3zM987 506h3v1.6h-3zM991 506h1v1.6h-1zM980 522h3v1.6h-3zM984 522h2v1.6h-2zM987 522h5v1.6h-5zM982 526h2v1.6h-2zM985 526h4v1.6h-4zM975 532h2v1.6h-2zM978 532h1v1.6h-1zM978 542h5v1.6h-5zM984 542h2v1.6h-2zM977 544h3v1.6h-3zM981 544h3v1.6h-3zM979 546h6v1.6h-6zM986 546h3v1.6h-3zM978 558h2v1.6h-2zM981 558h4v1.6h-4zM975 562h2v1.6h-2zM978 562h6v1.6h-6zM974 564h3v1.6h-3zM981 582h3v1.6h-3zM985 582h4v1.6h-4zM990 582h2v1.6h-2zM974 586h3v1.6h-3zM978 586h4v1.6h-4zM983 586h3v1.6h-3zM974 588h6v1.6h-6zM981 588h5v1.6h-5zM978 590h3v1.6h-3zM976 602h2v1.6h-2zM979 602h2v1.6h-2zM982 602h3v1.6h-3zM980 604h5v1.6h-5zM986 604h5v1.6h-5zM974 612h6v1.6h-6zM981 612h1v1.6h-1zM982 630h4v1.6h-4zM987 630h2v1.6h-2zM990 630h1v1.6h-1zM974 632h4v1.6h-4zM976 634h2v1.6h-2zM979 634h2v1.6h-2zM974 640h2v1.6h-2zM977 640h3v1.6h-3zM978 642h3v1.6h-3zM982 642h5v1.6h-5zM974 650h3v1.6h-3zM981 660h3v1.6h-3zM985 660h3v1.6h-3zM989 660h1v1.6h-1zM977 662h3v1.6h-3zM981 662h6v1.6h-6zM975 664h5v1.6h-5zM981 664h2v1.6h-2zM978 674h5v1.6h-5zM984 674h1v1.6h-1zM979 676h3v1.6h-3zM983 676h2v1.6h-2zM986 676h1v1.6h-1zM981 688h7v1.6h-7zM989 688h3v1.6h-3zM978 690h3v1.6h-3zM982 690h4v1.6h-4zM982 700h5v1.6h-5zM988 700h2v1.6h-2zM991 700h1v1.6h-1zM978 702h5v1.6h-5zM984 702h3v1.6h-3zM978 708h4v1.6h-4zM977 710h3v1.6h-3zM981 710h1v1.6h-1zM975 716h5v1.6h-5zM981 716h3v1.6h-3zM979 718h4v1.6h-4zM978 720h3v1.6h-3zM982 720h2v1.6h-2zM980 722h3v1.6h-3zM984 722h2v1.6h-2zM976 724h4v1.6h-4zM981 726h4v1.6h-4zM986 726h4v1.6h-4zM975 730h6v1.6h-6zM982 730h2v1.6h-2zM982 740h3v1.6h-3zM978 742h5v1.6h-5zM984 742h1v1.6h-1zM974 744h5v1.6h-5zM975 746h4v1.6h-4zM980 746h2v1.6h-2zM981 758h4v1.6h-4zM986 758h3v1.6h-3zM974 768h3v1.6h-3zM975 770h3v1.6h-3zM979 770h2v1.6h-2zM982 770h1v1.6h-1zM979 772h4v1.6h-4zM974 780h5v1.6h-5zM974 782h5v1.6h-5zM980 784h7v1.6h-7zM988 784h3v1.6h-3zM977 788h6v1.6h-6zM984 788h2v1.6h-2zM982 792h3v1.6h-3zM986 792h6v1.6h-6zM981 794h5v1.6h-5zM987 794h2v1.6h-2zM990 794h2v1.6h-2zM981 806h6v1.6h-6zM988 806h2v1.6h-2zM979 820h7v1.6h-7zM978 836h4v1.6h-4zM983 836h7v1.6h-7zM979 846h3v1.6h-3zM977 852h3v1.6h-3zM975 860h3v1.6h-3zM975 866h2v1.6h-2zM978 866h1v1.6h-1zM975 874h6v1.6h-6zM982 874h3v1.6h-3zM980 880h5v1.6h-5zM977 888h2v1.6h-2zM980 888h5v1.6h-5zM986 888h2v1.6h-2zM980 892h4v1.6h-4zM985 892h5v1.6h-5zM980 896h7v1.6h-7zM988 896h2v1.6h-2zM979 906h2v1.6h-2zM982 906h4v1.6h-4zM976 908h4v1.6h-4zM981 908h2v1.6h-2zM984 908h2v1.6h-2zM977 910h5v1.6h-5zM983 910h1v1.6h-1zM979 912h2v1.6h-2zM982 912h5v1.6h-5zM974 920h6v1.6h-6zM981 920h5v1.6h-5zM976 924h4v1.6h-4zM981 926h7v1.6h-7zM989 926h1v1.6h-1zM975 928h7v1.6h-7zM980 936h5v1.6h-5zM986 936h3v1.6h-3zM981 946h5v1.6h-5zM987 946h2v1.6h-2z" fill="#b5cea8" opacity="0.5"/><path d="M963 128h3v1.6h-3zM967 128h7v1.6h-7zM975 128h4v1.6h-4zM980 128h4v1.6h-4zM985 128h2v1.6h-2zM988 128h4v1.6h-4zM963 148h4v1.6h-4zM968 148h6v1.6h-6zM975 148h5v1.6h-5zM981 148h3v1.6h-3zM963 168h4v1.6h-4zM968 168h4v1.6h-4zM973 168h5v1.6h-5zM963 220h6v1.6h-6zM970 220h7v1.6h-7zM978 220h2v1.6h-2zM981 220h3v1.6h-3zM985 220h3v1.6h-3zM963 258h4v1.6h-4zM968 258h7v1.6h-7zM976 258h4v1.6h-4zM981 258h1v1.6h-1zM963 474h6v1.6h-6zM970 474h3v1.6h-3zM974 474h7v1.6h-7zM982 474h3v1.6h-3zM963 514h2v1.6h-2zM966 514h7v1.6h-7zM974 514h7v1.6h-7zM982 514h3v1.6h-3zM986 514h5v1.6h-5zM992 514h5v1.6h-5zM963 736h4v1.6h-4zM968 736h7v1.6h-7zM976 736h2v1.6h-2zM979 736h2v1.6h-2zM982 736h3v1.6h-3zM986 736h4v1.6h-4zM991 736h5v1.6h-5z" fill="#6a9955" opacity="0.5"/><path d="M997 104h1v1.6h-1zM963 108h1v1.6h-1zM997 110h1v1.6h-1zM963 114h1v1.6h-1zM1002 116h1v1.6h-1zM963 124h1v1.6h-1zM983 130h1v1.6h-1zM963 134h1v1.6h-1zM980 138h1v1.6h-1zM963 146h1v1.6h-1zM1002 150h1v1.6h-1zM963 156h1v1.6h-1zM1007 160h1v1.6h-1zM963 164h1v1.6h-1zM987 170h1v1.6h-1zM963 188h1v1.6h-1zM986 192h1v1.6h-1zM963 206h1v1.6h-1zM1020 208h1v1.6h-1zM963 216h1v1.6h-1zM994 222h1v1.6h-1zM963 234h1v1.6h-1zM1002 236h1v1.6h-1zM963 254h1v1.6h-1zM987 260h1v1.6h-1zM963 266h1v1.6h-1zM995 270h1v1.6h-1zM963 274h1v1.6h-1zM984 278h1v1.6h-1zM963 288h1v1.6h-1zM1002 292h1v1.6h-1zM963 296h1v1.6h-1zM980 300h1v1.6h-1zM963 312h1v1.6h-1zM995 316h1v1.6h-1zM963 320h1v1.6h-1zM1015 324h1v1.6h-1zM963 328h1v1.6h-1zM1007 332h1v1.6h-1zM963 350h1v1.6h-1zM1004 352h1v1.6h-1zM963 358h1v1.6h-1zM986 360h1v1.6h-1zM963 370h1v1.6h-1zM985 372h1v1.6h-1zM963 386h1v1.6h-1zM994 390h1v1.6h-1zM963 398h1v1.6h-1zM996 402h1v1.6h-1zM963 412h1v1.6h-1zM995 416h1v1.6h-1zM963 430h1v1.6h-1zM991 432h1v1.6h-1zM963 444h1v1.6h-1zM996 446h1v1.6h-1zM963 460h1v1.6h-1zM983 464h1v1.6h-1zM963 470h1v1.6h-1zM1000 476h1v1.6h-1zM963 486h1v1.6h-1zM989 490h1v1.6h-1zM963 500h1v1.6h-1zM991 504h1v1.6h-1zM963 512h1v1.6h-1zM1009 516h1v1.6h-1zM963 528h1v1.6h-1zM996 530h1v1.6h-1zM963 534h1v1.6h-1zM997 538h1v1.6h-1zM963 548h1v1.6h-1zM997 552h1v1.6h-1zM963 566h1v1.6h-1zM988 570h1v1.6h-1zM963 574h1v1.6h-1zM993 578h1v1.6h-1zM963 596h1v1.6h-1zM1023 600h1v1.6h-1zM963 606h1v1.6h-1zM988 608h1v1.6h-1zM963 614h1v1.6h-1zM991 618h1v1.6h-1zM963 624h1v1.6h-1zM978 628h1v1.6h-1zM963 636h1v1.6h-1zM1000 638h1v1.6h-1zM963 652h1v1.6h-1zM992 656h1v1.6h-1zM963 666h1v1.6h-1zM1000 670h1v1.6h-1zM963 684h1v1.6h-1zM982 686h1v1.6h-1zM963 704h1v1.6h-1zM993 706h1v1.6h-1zM963 712h1v1.6h-1zM995 714h1v1.6h-1zM963 732h1v1.6h-1zM980 738h1v1.6h-1zM963 750h1v1.6h-1zM989 752h1v1.6h-1zM963 760h1v1.6h-1zM988 764h1v1.6h-1zM963 774h1v1.6h-1zM998 778h1v1.6h-1zM963 796h1v1.6h-1zM990 800h1v1.6h-1zM963 810h1v1.6h-1zM1025 812h1v1.6h-1zM963 824h1v1.6h-1zM996 828h1v1.6h-1zM963 840h1v1.6h-1zM979 844h1v1.6h-1zM963 848h1v1.6h-1zM1002 850h1v1.6h-1zM963 854h1v1.6h-1zM1018 858h1v1.6h-1zM963 862h1v1.6h-1zM1011 864h1v1.6h-1zM963 882h1v1.6h-1zM1000 886h1v1.6h-1zM963 900h1v1.6h-1zM989 904h1v1.6h-1zM963 914h1v1.6h-1zM984 916h1v1.6h-1zM963 930h1v1.6h-1zM1001 934h1v1.6h-1zM963 938h1v1.6h-1zM998 942h1v1.6h-1zM963 952h1v1.6h-1zM1014 956h1v1.6h-1zM963 962h1v1.6h-1zM994 964h1v1.6h-1zM963 968h1v1.6h-1z" fill="#ffd700" opacity="0.5"/></svg>
<div class="ab" style="left:963px;top:140px;width:82px;height:6px;background:linear-gradient(90deg,#dcb000 0,#dcb000 37px,#7d6a1a 37px,#6a5818 100%)"></div>
<div class="ab" style="left:963px;top:285px;width:82px;height:2px;background:linear-gradient(90deg,#dcb000 0,#dcb000 64px,#7d6a1a 64px,#6a5818 100%)"></div>
<div class="ab" style="left:963px;top:397px;width:82px;height:2px;background:linear-gradient(90deg,#dcb000 0,#dcb000 36px,#7d6a1a 36px,#6a5818 100%)"></div>
<div class="ab" style="left:963px;top:825px;width:82px;height:2px;background:linear-gradient(90deg,#dcb000 0,#dcb000 15px,#7d6a1a 15px,#6a5818 100%)"></div>
<div class="ab" style="left:963px;top:949px;width:82px;height:2px;background:linear-gradient(90deg,#dcb000 0,#dcb000 22px,transparent 22px,transparent 100%)"></div>
<div class="ab" style="left:963px;top:968px;width:82px;height:6px;background:linear-gradient(90deg,#dcb000 0,#dcb000 31px,#7d6a1a 31px,#6a5818 100%)"></div>
<svg class="ab" style="left:0;top:0" width="1045" height="1000"><rect x="120" y="286" width="698" height="649" fill="none" stroke="#ff0000" stroke-width="3.6" stroke-dasharray="2.6 6.4" stroke-linecap="round"/></svg>
<div class="ab" style="left:0;top:1014px;width:1045px;height:26px;background:#181818;border-top:1px solid #2b2b2b"></div>
<div class="ab" style="left:0;top:1014px;width:41px;height:26px;background:#0078d4"></div>
<svg class="ab" style="left:12px;top:1019px" width="18" height="16" fill="none" stroke="#ffffff" stroke-width="1.5"><path d="M3 6 L8 10 L3 14 M15 2 L10 6 L15 10"/></svg>
<svg class="ab" style="left:51px;top:1019px" width="70" height="17" fill="none" stroke="#cccccc" stroke-width="1.3"><circle cx="8" cy="8" r="7"/><path d="M5 5 L11 11 M11 5 L5 11"/><path d="M41 1.5 L48.5 15 H33.5 Z M41 6 v5 M41 12.5 v1"/></svg>
<div class="ab ui" style="left:70px;top:1020px;font-size:14px;color:#cccccc">0</div>
<div class="ab ui" style="left:103px;top:1020px;font-size:14px;color:#cccccc">23</div>
<div class="ab ui" style="left:548px;top:1020px;font-size:14px;color:#cccccc">Ln 846, Col 23</div>
<div class="ab ui" style="left:656px;top:1020px;font-size:14px;color:#cccccc">Spaces: 4</div>
<div class="ab ui" style="left:734px;top:1020px;font-size:14px;color:#cccccc">UTF-8</div>
<div class="ab ui" style="left:791px;top:1020px;font-size:14px;color:#cccccc">CRLF</div>
<div class="ab ui" style="left:842px;top:1020px;font-size:14px;color:#cccccc">CSS</div>
<div class="ab ui" style="left:906px;top:1020px;font-size:14px;color:#cccccc">Port : 5500</div>
<svg class="ab" style="left:884px;top:1018px" width="18" height="18" fill="none" stroke="#cccccc" stroke-width="1.3"><circle cx="9" cy="9" r="7"/><line x1="4" y1="14" x2="14" y2="4"/></svg>
<svg class="ab" style="left:992px;top:1017px" width="53" height="20" fill="none" stroke="#cccccc" stroke-width="1.3"><circle cx="8.5" cy="9.5" r="3.3"/><path d="M2.5 17.5 q6 -6.5 12 0"/><path d="M8 5.5 V1.8 H19.5 V9.2 H16 L13.5 11.5 V9.2"/><path d="M40.5 15.5 V9.5 a5.5 5.5 0 0 1 11 0 V15.5 l1.5 1.2 H39 z M44 18.5 h4"/></svg>
<div class="ab" style="left:1045px;top:0;width:875px;height:1040px;background:#ffffff"></div>
<div class="ab" style="left:1045px;top:0;width:875px;height:42px;background:#cae8bf;border-top:1px solid #4a4a4a"></div>
<svg class="ab" style="left:1065px;top:19px" width="16" height="13" viewBox="0 0 16 13"><path d="M0 2 v10 h3.5 v-7 l4.5 3.4 4.5 -3.4 v7 h3.5 v-10 l-1.5 -1.5 -6.5 4.8 -6.5 -4.8 z" fill="#ea4335"/><path d="M0 2 v10 h3.5 v-7z" fill="#4285f4"/><path d="M12.5 5 v7 h3.5 v-10z" fill="#34a853"/><path d="M14.5 0.5 L16 2 L12.5 5z" fill="#fbbc04"/></svg>
<div class="ab ui" style="left:1089px;top:17px;font-size:13.2px;color:#1f1f1f;width:178px;overflow:hidden;letter-spacing:-0.3px;-webkit-mask-image:linear-gradient(90deg,#000 158px,transparent 178px)">Discord<span style="letter-spacing:-1.1px">용 이메일 주소 인증</span> - tn</div>
<svg class="ab" style="left:1271px;top:20px" width="12" height="12" stroke="#202020" stroke-width="1.6"><path d="M2 2 L10 10 M10 2 L2 10"/></svg>
<div class="ab" style="left:1293px;top:9px;width:238px;height:34px;background:#ffffff;border-radius:9px 9px 0 0"></div>
<div class="ab" style="left:1284px;top:33px;width:9px;height:9px;background:radial-gradient(circle at 0 0,#cae8bf 9px,#fff 9.5px)"></div>
<div class="ab" style="left:1531px;top:33px;width:9px;height:9px;background:radial-gradient(circle at 100% 0,#cae8bf 9px,#fff 9.5px)"></div>
<div class="ab" style="left:1304px;top:18px;width:16px;height:16px;background:#2a0d52"></div><div class="ab ui" style="left:1307px;top:18px;font-size:13px;font-weight:bold;color:#fff">C</div>
<div class="ab ui" style="left:1328px;top:17px;font-size:13.2px;color:#1f1f1f;letter-spacing:-1.3px">하이시네마_1</div>
<svg class="ab" style="left:1510px;top:20px" width="12" height="12" stroke="#202020" stroke-width="1.6"><path d="M2 2 L10 10 M10 2 L2 10"/></svg>
<svg class="ab" style="left:1546px;top:18px" width="16" height="16" stroke="#202020" stroke-width="2"><path d="M8 1 V15 M1 8 H15"/></svg>
<svg class="ab" style="left:1740px;top:0px" width="180" height="22" fill="none" stroke="#202020" stroke-width="1.2"><path d="M12 12 L17.5 17 L23 12"/><path d="M58 15.5 H68"/><rect x="104.5" y="10.5" width="10" height="10"/><path d="M150 10 L160 20 M160 10 L150 20"/></svg>
<div class="ab" style="left:1154px;top:47px;width:624px;height:28px;background:#e3e4e3;border-radius:14px"></div>
<svg class="ab" style="left:1058px;top:51px" width="90" height="20" fill="none" stroke="#5f6368" stroke-width="1.8"><path d="M15 10 H3 M8 4 L2.5 10 L8 16"/><path d="M35 10 H47 M42 4 L47.5 10 L42 16" stroke="#6b6f73"/><path d="M80 5.5 A6 6 0 1 0 81 12" stroke="#202124" stroke-width="2"/><path d="M76.5 3.5 L81.5 3.5 L81.5 8.5 Z" fill="#202124" stroke="none"/></svg>
<svg class="ab" style="left:1163px;top:52px" width="18" height="18" fill="none" stroke="#5f6368" stroke-width="1.5"><circle cx="9" cy="9" r="7"/><path d="M9 8 V13 M9 5 V6.2" stroke-width="1.8"/></svg>
<div class="ab ui" style="left:1187px;top:52px;font-size:14px;color:#202124">127.0.0.1<span style="color:#5f6368">:5500/index.html</span></div>
<svg class="ab" style="left:1717px;top:51px" width="60" height="20" fill="none" stroke="#5f6368" stroke-width="1.4"><path d="M3 8 V17 H16"/><path d="M5 14 q2 -7 10 -7 V4 l5 4.5 -5 4.5 v-3 q-6 0 -10 4"/><path d="M44 2.5 l2.3 5 5.3 .5 -4 3.6 1.2 5.3 -4.8 -2.8 -4.8 2.8 1.2 -5.3 -4 -3.6 5.3 -.5z"/></svg>
<svg class="ab" style="left:1790px;top:51px" width="120" height="20"><path d="M4 7 h3 a2 2 0 1 1 4 0 h3 v3 a2 2 0 1 1 0 4 v3 h-3 a2 2 0 1 0 -4 0 h-3 v-3 a2 2 0 1 0 0 -4z" fill="#202124"/><rect x="37" y="3.5" width="13" height="13" fill="none" stroke="#202124" stroke-width="2"/><rect x="44" y="3.5" width="6" height="13" fill="#202124"/><path d="M64 16 q-2 -9 4 -11 q6 -1 6 6 v6z" fill="#202124"/><ellipse cx="69" cy="11" rx="3" ry="4" fill="#fff"/><path d="M74 9 q1 -6 6 -5 q5 1 4 6z" fill="#2d5a2d"/><ellipse cx="79" cy="12" rx="3.5" ry="3.5" fill="#fff" stroke="#202124" stroke-width="0.8"/><path d="M66 17 h16" stroke="#888" stroke-width="1"/><circle cx="107" cy="4" r="1.8" fill="#202124"/><circle cx="107" cy="10" r="1.8" fill="#202124"/><circle cx="107" cy="16" r="1.8" fill="#202124"/></svg>
<div class="ab" style="left:1045px;top:79px;width:875px;height:1px;background:#d0d0d0"></div>
<div class="ab" style="left:1069px;top:80px;width:809px;height:392px;background:#efefef"></div>
<div class="ab ui" style="left:1104px;top:95px;font-size:14px;color:#333;letter-spacing:-0.5px">액션 미국, 오스트레일리아</div>
<div class="ab ui" style="left:1104px;top:120px;font-size:14px;color:#333;letter-spacing:-0.3px">142분 12세 관람가</div>
<div class="ab ui" style="left:1104px;top:151px;font-size:14px;color:#333;letter-spacing:-0.55px;width:740px;text-align:justify;text-align-last:justify;white-space:normal;">더욱 강력해진 포스로 돌아온 ‘레이’는 전 우주를 어둠의 힘으로 지배하려는 ‘카일로 렌’에게 대적할 유일한 히로인으로 거듭난</div>
<div class="ab ui" style="left:1104px;top:172px;font-size:14px;color:#333;letter-spacing:-0.55px;width:740px;text-align:justify;text-align-last:justify;white-space:normal;">다. 미래의 운명을 쥔 ‘레이’는 든든한 조력자이자 친구인 ‘핀’, ‘포’와 함께 새로운 미래를 위한 험난한 여정을 떠나고, 선과 악의</div>
<div class="ab ui" style="left:1104px;top:193px;font-size:14px;color:#333;letter-spacing:-0.55px;width:740px;text-align:justify;text-align-last:justify;white-space:normal;">거대한 전쟁을 마주하게 된다. 또한 ‘카일로 렌’과의 피할 수 없는 운명적 대결을 펼치게 되는데… 전쟁을 끝내고 새로운 전설로</div>
<div class="ab ui" style="left:1104px;top:214px;font-size:14px;color:#333;letter-spacing:-0.55px;">탄생할 선택받은 영웅은 누가 될 것인가?!</div>
<div class="ab" style="left:1103px;top:277px;width:363px;height:36px;background:#2c2f33"></div>
<div class="ab ui" style="left:1113px;top:287px;font-size:14px;color:#fff;letter-spacing:-0.3px">2016년 1월 25일</div>
<div class="ab" style="left:1481px;top:277px;width:363px;height:36px;background:#2c2f33"></div>
<div class="ab ui" style="left:1495px;top:287px;font-size:14px;color:#fff">오전 0:00</div>
<svg class="ab" style="left:1828px;top:290px" width="12" height="10" fill="none" stroke="#fff" stroke-width="2"><path d="M1.5 2 L6 6.5 L10.5 2"/></svg>
<div class="ab" style="left:1103px;top:328px;width:741px;height:36px;background:#2c2f33"></div>
<div class="ab ui" style="left:1113px;top:338px;font-size:13px;color:#8d8d8d;letter-spacing:-0.5px">주소 또는 도로명을 입력해주세요.</div>
<div class="ab" style="left:1103px;top:389px;width:363px;height:49px;background:#fff;border:1px solid #6a3ec0"></div>
<div class="ab ui" style="left:1103px;top:401px;width:363px;text-align:center;font-size:18px;color:#5b2ea6;-webkit-text-stroke:0.2px #5b2ea6;letter-spacing:-0.5px">좌석확인</div>
<div class="ab" style="left:1481px;top:389px;width:363px;height:49px;background:#3c0e66"></div>
<div class="ab ui" style="left:1481px;top:401px;width:363px;text-align:center;font-size:18px;font-weight:bold;color:#fff;letter-spacing:-0.5px">예매하기</div>
<div class="ab ui" style="left:1069px;top:524px;font-size:30px;color:#111;font-weight:400;letter-spacing:-1.3px;-webkit-text-stroke:0.7px #111">공지사항</div>
<div class="ab ui" style="left:1345px;top:524px;font-size:30px;color:#111;font-weight:400;letter-spacing:-1.3px;-webkit-text-stroke:0.7px #111">할인카드</div>
<div class="ab ui" style="left:1620px;top:524px;font-size:30px;color:#111;font-weight:400;letter-spacing:-1.3px;-webkit-text-stroke:0.7px #111">고객센터</div>
<div class="ab" style="left:1069px;top:587px;width:259px;height:350px;border:1px solid #dcdcdc"></div>
<div class="ab" style="left:1344px;top:587px;width:259px;height:352px;border:1px solid #dcdcdc"></div>
<div class="ab ui" style="left:1087px;top:605px;font-size:13px;color:#333;letter-spacing:-0.6px">전체공지영화관 공지</div>
<div class="ab ui" style="left:1087px;top:659px;font-size:13px;color:#333;letter-spacing:-0.4px;color:#222;font-weight:bold">영화관</div>
<div class="ab ui" style="left:1088px;top:659px;font-size:13px;color:#333;letter-spacing:-0.4px;color:#222;font-weight:bold">전체</div>
<div class="ab ui" style="left:1123px;top:659px;font-size:13px;color:#333;letter-spacing:-0.4px;letter-spacing:0.3px">2023.07.11</div>
<div class="ab ui" style="left:1132px;top:659px;font-size:13px;color:#333;letter-spacing:-0.4px;letter-spacing:0.3px">2023.07.11</div>
<div class="ab ui" style="left:1087px;top:718px;font-size:13px;color:#333;letter-spacing:-0.4px;color:#222;font-weight:bold">영화관</div>
<div class="ab ui" style="left:1088px;top:718px;font-size:13px;color:#333;letter-spacing:-0.4px;color:#222;font-weight:bold">전체</div>
<div class="ab ui" style="left:1123px;top:718px;font-size:13px;color:#333;letter-spacing:-0.4px;letter-spacing:0.3px">2023.07.11</div>
<div class="ab ui" style="left:1132px;top:718px;font-size:13px;color:#333;letter-spacing:-0.4px;letter-spacing:0.3px">2023.07.11</div>
<div class="ab ui" style="left:1087px;top:776px;font-size:13px;color:#333;letter-spacing:-0.4px;color:#222;font-weight:bold">영화관</div>
<div class="ab ui" style="left:1088px;top:776px;font-size:13px;color:#333;letter-spacing:-0.4px;color:#222;font-weight:bold">전체</div>
<div class="ab ui" style="left:1123px;top:776px;font-size:13px;color:#333;letter-spacing:-0.4px;letter-spacing:0.3px">2023.07.11</div>
<div class="ab ui" style="left:1132px;top:776px;font-size:13px;color:#333;letter-spacing:-0.4px;letter-spacing:0.3px">2023.07.11</div>
<div class="ab ui" style="left:1128px;top:678px;font-size:13px;color:#333;letter-spacing:-0.4px">[무대인사] (범죄도시3) 1주차 관람</div>
<div class="ab ui" style="left:1128px;top:678px;font-size:13px;color:#333;letter-spacing:-0.4px">[GV] 엘리멘탈 용산 스페셜 상영</div>
<div class="ab ui" style="left:1128px;top:678px;font-size:13px;color:#333;letter-spacing:-0.4px">[이벤트] 범죄도시3 무대 인사</div>
<div class="ab ui" style="left:1128px;top:698px;font-size:13px;color:#333;letter-spacing:-0.4px">누적 수 백만명 돌파</div>
<div class="ab ui" style="left:1128px;top:698px;font-size:13px;color:#333;letter-spacing:-0.4px">북서울 CGV 무대인사</div>
<div class="ab ui" style="left:1128px;top:737px;font-size:13px;color:#333;letter-spacing:-0.4px">[무대인사] (범죄도시3) 1주차 관람</div>
<div class="ab ui" style="left:1128px;top:737px;font-size:13px;color:#333;letter-spacing:-0.4px">[CGV 이벤트] 엘리멘탈 얼리버드</div>
<div class="ab ui" style="left:1128px;top:757px;font-size:13px;color:#333;letter-spacing:-0.4px">누적 수 백만명 돌파</div>
<div class="ab ui" style="left:1128px;top:757px;font-size:13px;color:#333;letter-spacing:-0.4px">진행 수 백만명 돌파</div>
<div class="ab ui" style="left:1128px;top:795px;font-size:13px;color:#333;letter-spacing:-0.4px">[무대인사] (범죄도시3) 1주차 관람</div>
<div class="ab ui" style="left:1128px;top:815px;font-size:13px;color:#333;letter-spacing:-0.4px">누적 수 백만명 돌파</div>
<svg class="ab" style="left:1045px;top:0" width="875" height="1000"><rect x="14" y="577" width="304" height="291" fill="none" stroke="#ff0000" stroke-width="3.6" stroke-dasharray="2.6 6.4" stroke-linecap="round"/></svg>
<div class="ab" style="left:1902px;top:80px;width:18px;height:959px;background:#f1f1f1"></div>
<div class="ab" style="left:1045px;top:1039px;width:875px;height:1px;background:#0f3550"></div>
<div class="ab" style="left:1904px;top:809px;width:14px;height:213px;background:#c1c1c1"></div>
<svg class="ab" style="left:1902px;top:82px" width="18" height="958"><path d="M5 11 L9 6 L13 11z M5 945 L13 945 L9 950z" fill="#505050"/></svg>
<div class="ab" style="left:0;top:1040px;width:1920px;height:40px;background:linear-gradient(90deg,#1c3540 0%,#1f3440 40%,#1e2f40 70%,#1b2940 100%)"></div>
<svg class="ab" style="left:15px;top:1051px" width="18" height="18" fill="#fff"><path d="M0 2.5 L7.5 1.4 V8.4 H0z M8.5 1.2 L18 0 V8.4 H8.5z M0 9.4 H7.5 V16.5 L0 15.5z M8.5 9.4 H18 V18 L8.5 16.6z"/></svg>
<div class="ab" style="left:48px;top:1040px;width:288px;height:40px;background:#f2f2f2"></div>
<svg class="ab" style="left:58px;top:1051px" width="20" height="20" fill="none" stroke="#1f1f1f" stroke-width="1.5"><circle cx="12" cy="7.5" r="5.5"/><path d="M8 11.5 L2 17.5"/></svg>
<div class="ab ui" style="left:88px;top:1050px;font-size:15px;color:#1f1f1f">찾기</div>
<svg class="ab" style="left:255px;top:1040px" width="81" height="40">
<defs><linearGradient id="sun" x1="0" y1="0" x2="0" y2="1"><stop offset="0" stop-color="#fbc02d"/><stop offset="1" stop-color="#f4511e"/></linearGradient></defs>
<ellipse cx="13" cy="12" rx="7" ry="3.5" fill="#f2d6de"/><ellipse cx="16" cy="9.5" rx="4" ry="3" fill="#f6e0e6"/>
<ellipse cx="64" cy="11" rx="9" ry="4.5" fill="#f2d6de"/><ellipse cx="61" cy="8" rx="5" ry="4" fill="#f6e0e6"/>
<circle cx="66" cy="28" r="8.5" fill="url(#sun)"/>
<path d="M26 40 Q48 29 81 30 V40z" fill="#8645a6"/><path d="M44 40 Q60 33 81 34.5" stroke="#c9a57a" stroke-width="1.6" fill="none"/><path d="M62 40 Q70 37 81 37.5" stroke="#c9a57a" stroke-width="1.4" fill="none"/>
<path d="M12 40 L16 8" stroke="#7a9a60" stroke-width="0.8"/><ellipse cx="14.6" cy="11.2" rx="1.5" ry="2.3" fill="#8a62c0" transform="rotate(-20 15.6 11.2)"/><ellipse cx="16.6" cy="12.2" rx="1.4" ry="2.1" fill="#a07ad8" transform="rotate(20 15.6 11.2)"/><ellipse cx="14.1" cy="15.4" rx="1.5" ry="2.3" fill="#8a62c0" transform="rotate(-20 15.1 15.4)"/><ellipse cx="16.1" cy="16.4" rx="1.4" ry="2.1" fill="#a07ad8" transform="rotate(20 15.1 15.4)"/><ellipse cx="13.6" cy="19.5" rx="1.5" ry="2.3" fill="#8a62c0" transform="rotate(-20 14.6 19.5)"/><ellipse cx="15.6" cy="20.5" rx="1.4" ry="2.1" fill="#a07ad8" transform="rotate(20 14.6 19.5)"/><ellipse cx="13.0" cy="23.7" rx="1.5" ry="2.3" fill="#8a62c0" transform="rotate(-20 14.0 23.7)"/><ellipse cx="15.0" cy="24.7" rx="1.4" ry="2.1" fill="#a07ad8" transform="rotate(20 14.0 23.7)"/><ellipse cx="12.5" cy="27.8" rx="1.5" ry="2.3" fill="#8a62c0" transform="rotate(-20 13.5 27.8)"/><ellipse cx="14.5" cy="28.8" rx="1.4" ry="2.1" fill="#a07ad8" transform="rotate(20 13.5 27.8)"/><path d="M17 40 L21 4" stroke="#7a9a60" stroke-width="0.8"/><ellipse cx="19.6" cy="7.6" rx="1.5" ry="2.3" fill="#8a62c0" transform="rotate(-20 20.6 7.6)"/><ellipse cx="21.6" cy="8.6" rx="1.4" ry="2.1" fill="#a07ad8" transform="rotate(20 20.6 7.6)"/><ellipse cx="19.1" cy="12.3" rx="1.5" ry="2.3" fill="#8a62c0" transform="rotate(-20 20.1 12.3)"/><ellipse cx="21.1" cy="13.3" rx="1.4" ry="2.1" fill="#a07ad8" transform="rotate(20 20.1 12.3)"/><ellipse cx="18.6" cy="17.0" rx="1.5" ry="2.3" fill="#8a62c0" transform="rotate(-20 19.6 17.0)"/><ellipse cx="20.6" cy="18.0" rx="1.4" ry="2.1" fill="#a07ad8" transform="rotate(20 19.6 17.0)"/><ellipse cx="18.0" cy="21.6" rx="1.5" ry="2.3" fill="#8a62c0" transform="rotate(-20 19.0 21.6)"/><ellipse cx="20.0" cy="22.6" rx="1.4" ry="2.1" fill="#a07ad8" transform="rotate(20 19.0 21.6)"/><ellipse cx="17.5" cy="26.3" rx="1.5" ry="2.3" fill="#8a62c0" transform="rotate(-20 18.5 26.3)"/><ellipse cx="19.5" cy="27.3" rx="1.4" ry="2.1" fill="#a07ad8" transform="rotate(20 18.5 26.3)"/><path d="M22 40 L25 11" stroke="#7a9a60" stroke-width="0.8"/><ellipse cx="23.7" cy="13.9" rx="1.5" ry="2.3" fill="#8a62c0" transform="rotate(-20 24.7 13.9)"/><ellipse cx="25.7" cy="14.9" rx="1.4" ry="2.1" fill="#a07ad8" transform="rotate(20 24.7 13.9)"/><ellipse cx="23.3" cy="17.7" rx="1.5" ry="2.3" fill="#8a62c0" transform="rotate(-20 24.3 17.7)"/><ellipse cx="25.3" cy="18.7" rx="1.4" ry="2.1" fill="#a07ad8" transform="rotate(20 24.3 17.7)"/><ellipse cx="22.9" cy="21.4" rx="1.5" ry="2.3" fill="#8a62c0" transform="rotate(-20 23.9 21.4)"/><ellipse cx="24.9" cy="22.4" rx="1.4" ry="2.1" fill="#a07ad8" transform="rotate(20 23.9 21.4)"/><ellipse cx="22.5" cy="25.2" rx="1.5" ry="2.3" fill="#8a62c0" transform="rotate(-20 23.5 25.2)"/><ellipse cx="24.5" cy="26.2" rx="1.4" ry="2.1" fill="#a07ad8" transform="rotate(20 23.5 25.2)"/><ellipse cx="22.1" cy="29.0" rx="1.5" ry="2.3" fill="#8a62c0" transform="rotate(-20 23.1 29.0)"/><ellipse cx="24.1" cy="30.0" rx="1.4" ry="2.1" fill="#a07ad8" transform="rotate(20 23.1 29.0)"/><path d="M28 40 L30 6" stroke="#7a9a60" stroke-width="0.8"/><ellipse cx="28.8" cy="9.4" rx="1.5" ry="2.3" fill="#8a62c0" transform="rotate(-20 29.8 9.4)"/><ellipse cx="30.8" cy="10.4" rx="1.4" ry="2.1" fill="#a07ad8" transform="rotate(20 29.8 9.4)"/><ellipse cx="28.5" cy="13.8" rx="1.5" ry="2.3" fill="#8a62c0" transform="rotate(-20 29.5 13.8)"/><ellipse cx="30.5" cy="14.8" rx="1.4" ry="2.1" fill="#a07ad8" transform="rotate(20 29.5 13.8)"/><ellipse cx="28.3" cy="18.2" rx="1.5" ry="2.3" fill="#8a62c0" transform="rotate(-20 29.3 18.2)"/><ellipse cx="30.3" cy="19.2" rx="1.4" ry="2.1" fill="#a07ad8" transform="rotate(20 29.3 18.2)"/><ellipse cx="28.0" cy="22.7" rx="1.5" ry="2.3" fill="#8a62c0" transform="rotate(-20 29.0 22.7)"/><ellipse cx="30.0" cy="23.7" rx="1.4" ry="2.1" fill="#a07ad8" transform="rotate(20 29.0 22.7)"/><ellipse cx="27.8" cy="27.1" rx="1.5" ry="2.3" fill="#8a62c0" transform="rotate(-20 28.8 27.1)"/><ellipse cx="29.8" cy="28.1" rx="1.4" ry="2.1" fill="#a07ad8" transform="rotate(20 28.8 27.1)"/><path d="M33 40 L37 14" stroke="#7a9a60" stroke-width="0.8"/><ellipse cx="35.6" cy="16.6" rx="1.5" ry="2.3" fill="#8a62c0" transform="rotate(-20 36.6 16.6)"/><ellipse cx="37.6" cy="17.6" rx="1.4" ry="2.1" fill="#a07ad8" transform="rotate(20 36.6 16.6)"/><ellipse cx="35.1" cy="20.0" rx="1.5" ry="2.3" fill="#8a62c0" transform="rotate(-20 36.1 20.0)"/><ellipse cx="37.1" cy="21.0" rx="1.4" ry="2.1" fill="#a07ad8" transform="rotate(20 36.1 20.0)"/><ellipse cx="34.6" cy="23.4" rx="1.5" ry="2.3" fill="#8a62c0" transform="rotate(-20 35.6 23.4)"/><ellipse cx="36.6" cy="24.4" rx="1.4" ry="2.1" fill="#a07ad8" transform="rotate(20 35.6 23.4)"/><ellipse cx="34.0" cy="26.7" rx="1.5" ry="2.3" fill="#8a62c0" transform="rotate(-20 35.0 26.7)"/><ellipse cx="36.0" cy="27.7" rx="1.4" ry="2.1" fill="#a07ad8" transform="rotate(20 35.0 26.7)"/><ellipse cx="33.5" cy="30.1" rx="1.5" ry="2.3" fill="#8a62c0" transform="rotate(-20 34.5 30.1)"/><ellipse cx="35.5" cy="31.1" rx="1.4" ry="2.1" fill="#a07ad8" transform="rotate(20 34.5 30.1)"/><path d="M38 40 L42 9" stroke="#7a9a60" stroke-width="0.8"/><ellipse cx="40.6" cy="12.1" rx="1.5" ry="2.3" fill="#8a62c0" transform="rotate(-20 41.6 12.1)"/><ellipse cx="42.6" cy="13.1" rx="1.4" ry="2.1" fill="#a07ad8" transform="rotate(20 41.6 12.1)"/><ellipse cx="40.1" cy="16.1" rx="1.5" ry="2.3" fill="#8a62c0" transform="rotate(-20 41.1 16.1)"/><ellipse cx="42.1" cy="17.1" rx="1.4" ry="2.1" fill="#a07ad8" transform="rotate(20 41.1 16.1)"/><ellipse cx="39.6" cy="20.2" rx="1.5" ry="2.3" fill="#8a62c0" transform="rotate(-20 40.6 20.2)"/><ellipse cx="41.6" cy="21.2" rx="1.4" ry="2.1" fill="#a07ad8" transform="rotate(20 40.6 20.2)"/><ellipse cx="39.0" cy="24.2" rx="1.5" ry="2.3" fill="#8a62c0" transform="rotate(-20 40.0 24.2)"/><ellipse cx="41.0" cy="25.2" rx="1.4" ry="2.1" fill="#a07ad8" transform="rotate(20 40.0 24.2)"/><ellipse cx="38.5" cy="28.2" rx="1.5" ry="2.3" fill="#8a62c0" transform="rotate(-20 39.5 28.2)"/><ellipse cx="40.5" cy="29.2" rx="1.4" ry="2.1" fill="#a07ad8" transform="rotate(20 39.5 28.2)"/><path d="M44 40 L48 12" stroke="#7a9a60" stroke-width="0.8"/><ellipse cx="46.6" cy="14.8" rx="1.5" ry="2.3" fill="#8a62c0" transform="rotate(-20 47.6 14.8)"/><ellipse cx="48.6" cy="15.8" rx="1.4" ry="2.1" fill="#a07ad8" transform="rotate(20 47.6 14.8)"/><ellipse cx="46.1" cy="18.4" rx="1.5" ry="2.3" fill="#8a62c0" transform="rotate(-20 47.1 18.4)"/><ellipse cx="48.1" cy="19.4" rx="1.4" ry="2.1" fill="#a07ad8" transform="rotate(20 47.1 18.4)"/><ellipse cx="45.6" cy="22.1" rx="1.5" ry="2.3" fill="#8a62c0" transform="rotate(-20 46.6 22.1)"/><ellipse cx="47.6" cy="23.1" rx="1.4" ry="2.1" fill="#a07ad8" transform="rotate(20 46.6 22.1)"/><ellipse cx="45.0" cy="25.7" rx="1.5" ry="2.3" fill="#8a62c0" transform="rotate(-20 46.0 25.7)"/><ellipse cx="47.0" cy="26.7" rx="1.4" ry="2.1" fill="#a07ad8" transform="rotate(20 46.0 25.7)"/><ellipse cx="44.5" cy="29.4" rx="1.5" ry="2.3" fill="#8a62c0" transform="rotate(-20 45.5 29.4)"/><ellipse cx="46.5" cy="30.4" rx="1.4" ry="2.1" fill="#a07ad8" transform="rotate(20 45.5 29.4)"/>
</svg>
<div class="ab" style="left:584px;top:1040px;width:49px;height:40px;background:#46565f"></div>
<div class="ab" style="left:633px;top:1040px;width:48px;height:40px;background:#a3652f;border-right:3px solid #8a5224"></div>
<div class="ab" style="left:343px;top:1078px;width:40px;height:2px;background:#6fb4e8"></div>
<div class="ab" style="left:441px;top:1078px;width:40px;height:2px;background:#6fb4e8"></div>
<div class="ab" style="left:539px;top:1078px;width:40px;height:2px;background:#6fb4e8"></div>
<div class="ab" style="left:584px;top:1078px;width:49px;height:2px;background:#6fb4e8"></div>
<div class="ab" style="left:633px;top:1078px;width:48px;height:2px;background:#ff8c00"></div>
<div class="ab" style="left:686px;top:1078px;width:40px;height:2px;background:#6fb4e8"></div>
<div class="ab" style="left:735px;top:1078px;width:40px;height:2px;background:#6fb4e8"></div>
<svg class="ab" style="left:345px;top:1044px" width="430" height="32">
<circle cx="17" cy="16" r="12" fill="#1a7fd8"/><path d="M5.5 14 q2 -10 12 -10 q10 0 11.5 10 q0 5 -5 5 h-9 q0 5 6 6.5 q-12 2 -15 -8z" fill="#33c1e8"/><path d="M18 4 q10 0 11.5 10 q0 5 -5 5 h-5 q4 -4 1 -9 q-2 -4 -6 -6z" fill="#5ed17a"/><ellipse cx="18" cy="17" rx="4" ry="2.5" fill="#1d3540"/>
<circle cx="66" cy="16" r="12" fill="#db4437"/><path d="M66 16 L76.4 10 A12 12 0 0 1 60 26.4z" fill="#fbbc05"/><path d="M66 16 L60 26.4 A12 12 0 0 1 55.6 10z" fill="#0f9d58"/><circle cx="66" cy="16" r="5.5" fill="#fff"/><circle cx="66" cy="16" r="4.3" fill="#4285f4"/>
<rect x="104" y="8" width="22" height="17" rx="2" fill="#f8c54a"/><rect x="104" y="13" width="22" height="12" fill="#ffd766"/><rect x="110" y="20" width="10" height="5" fill="#1a73c8"/>
<ellipse cx="165" cy="16" rx="11" ry="7" fill="#9a9a9a" transform="rotate(-20 165 16)"/><ellipse cx="165" cy="14" rx="11" ry="7" fill="#f4f4f4" stroke="#d23c3c" stroke-width="1.5" transform="rotate(-20 165 14)"/><path d="M163 8 L166 20 M169 8 L165 20" stroke="#666" stroke-width="1"/><circle cx="163" cy="24" r="2.5" fill="none" stroke="#2a8ad8" stroke-width="1.6"/><circle cx="171" cy="24" r="2.5" fill="none" stroke="#2a8ad8" stroke-width="1.6"/>
<path d="M224 3 L231 6.5 V25.5 L224 29 L212 18 L207 22 L204 20.5 V11.5 L207 10 L212 14z M224 10 L216 16 L224 22z" fill="#2aa0ef"/>
<circle cx="264" cy="16" r="12" fill="#db4437"/><path d="M264 16 L274.4 10 A12 12 0 0 1 258 26.4z" fill="#fbbc05"/><path d="M264 16 L258 26.4 A12 12 0 0 1 253.6 10z" fill="#0f9d58"/><circle cx="264" cy="16" r="5.5" fill="#fff"/><circle cx="264" cy="16" r="4.3" fill="#4285f4"/><circle cx="273" cy="24" r="7" fill="#fff"/><circle cx="273" cy="24" r="5" fill="#333"/>
<rect x="300" y="4" width="25" height="25" rx="2" fill="#fee500"/><ellipse cx="312.5" cy="15" rx="9" ry="7" fill="#3c1e1e"/><text x="312.5" y="17.5" font-size="6" fill="#fee500" text-anchor="middle" font-family="Liberation Sans" font-weight="bold">TALK</text>
<rect x="350" y="5" width="22" height="22" fill="#ffd400"/><path d="M372 18 L363 27 H372z" fill="#5a4a10"/>
<rect x="398" y="5" width="23" height="22" fill="#2196f3"/><path d="M398 27 L407 16 L414 22 L421 15 V27z" fill="#0d47a1"/><circle cx="414" cy="10" r="2" fill="#fff"/>
</svg>
<svg class="ab" style="left:1520px;top:1040px" width="270" height="40">
<path d="M9.5 23.5 Q22 21 29 11" stroke="#d8452a" stroke-width="3" fill="none"/><path d="M22.5 7 H31 V15.5z" fill="#d8452a"/>
<rect x="9.5" y="29" width="4" height="3" fill="#d8452a"/><rect x="15.5" y="27" width="4" height="5" fill="#d8452a"/><rect x="21.5" y="24" width="4" height="8" fill="#d8452a"/><rect x="27.5" y="19" width="4" height="13" fill="#c83a22"/>
<g fill="none" stroke="#fff" stroke-width="1.3">
<path d="M154.8 22.6 L161 16.6 L167 22.6"/>
<rect x="180.5" y="17.5" width="8" height="6.5" rx="1.8"/><path d="M188.5 19.5 L191.3 17.8 V23.7 L188.5 22"/><path d="M177.5 14 q7.5 -3 14 0 M177.5 27.5 q7.5 3 14 0"/>
<rect x="205.5" y="14.5" width="11.5" height="9.5"/><path d="M208 26.7 H214.5 M211.2 24 V26.7"/><rect x="201" y="14.5" width="4.5" height="4.2"/><path d="M203.2 18.7 V27.5"/>
<path d="M225 18 H227.5 L231 14.5 V25.5 L227.5 22 H225 Z"/>
</g>
<circle cx="236.4" cy="23.3" r="4.5" fill="#e81123"/><path d="M234.4 21.3 L238.4 25.3 M238.4 21.3 L234.4 25.3" stroke="#fff" stroke-width="1.2"/>
<circle cx="256" cy="20" r="7" fill="#a0a4aa" stroke="#111a28" stroke-width="0.8"/><path d="M253 17 L259 23 M259 17 L253 23" stroke="#1b2940" stroke-width="1.8"/>
</svg>
<div class="ab ui" style="left:1560px;top:1051px;font-size:14px;color:#fff">DOW</div>
<div class="ab ui" style="left:1604px;top:1051px;font-size:14px;color:#ff6a6a">+0.62%</div>
<div class="ab ui" style="left:1798px;top:1042px;font-size:13px;color:#fff">오후 12:09</div>
<div class="ab ui" style="left:1794px;top:1060px;font-size:13px;color:#fff">2023-07-11</div>
<svg class="ab" style="left:1878px;top:1050px" width="20" height="20" fill="none" stroke="#fff" stroke-width="1.2"><path d="M1.5 2.5 H18.5 V14.5 H9 L5 18 V14.5 H1.5z"/></svg>
<div class="ab" style="left:1914px;top:1040px;width:1px;height:40px;background:#7a8590"></div>
</body></html>
